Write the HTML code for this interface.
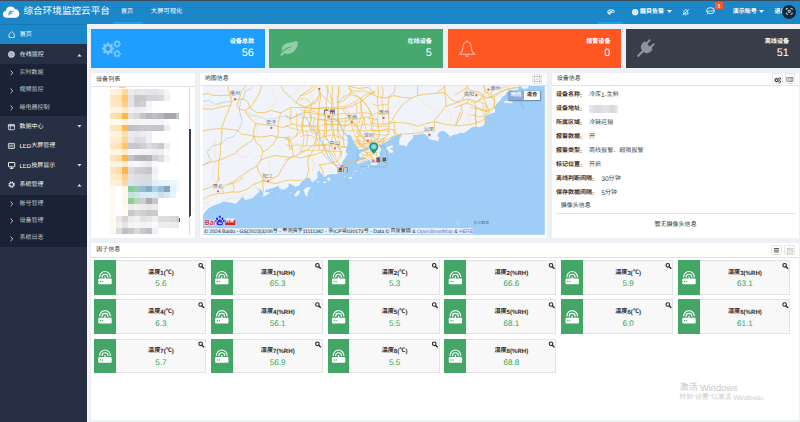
<!DOCTYPE html>
<html lang="zh-CN">
<head>
<meta charset="utf-8">
<title>综合环境监控云平台</title>
<style>
html,body{margin:0;padding:0;}
body{width:800px;height:422px;overflow:hidden;position:relative;background:#edf0f5;font-family:"Liberation Sans","Noto Sans CJK SC",sans-serif;text-rendering:geometricPrecision;}
div,span{box-sizing:border-box;}
svg{position:absolute;overflow:visible;}
i{font-style:normal;position:relative;top:-1px;}
</style>
</head>
<body>
<!-- top bar -->
<div style="position:absolute;left:0px;top:0px;width:800px;height:24px;background:#1b87c9;"></div><div style="position:absolute;left:0px;top:0px;width:800px;height:1px;background:#3a4b5c;"></div><svg style="left:1.800px;top:5.700px" width="18.400" height="11.800" viewBox="0 0 36.400 24.400"><path d="M8.500 24.200a7.300 7.300 0 0 1-1.200-14.500a10 10 0 0 1 19-3a9 9 0 0 1 2.600 17.500z" fill="#fff"/><path d="M15.300 9.800h8.200l-.8 2.200h-5.400l-.7 1.800h4.400l-.8 2.100h-4.400l-1.200 3.200h-2.700z" fill="#2d90d1"/><path d="M11.500 12.500h2.600M10.800 14.600h2.600" stroke="#6cb0e0" stroke-width=".9"/></svg><div style="position:absolute;left:23.5px;top:4px;height:17px;line-height:17px;font-size:9.6px;color:#fff;white-space:nowrap;"><i>综</i><i>合</i><i>环</i><i>境</i><i>监</i><i>控</i><i>云</i><i>平</i><i>台</i></div><div style="position:absolute;left:127.1px;top:7px;height:12px;line-height:12px;font-size:6px;color:#fff;transform:translateX(-50%);white-space:nowrap;"><i>首</i><i>页</i></div><div style="position:absolute;left:166.6px;top:6px;height:13px;line-height:13px;font-size:6.3px;color:#fff;transform:translateX(-50%);white-space:nowrap;"><i>大</i><i>屏</i><i>可</i><i>视</i><i>化</i></div><div style="position:absolute;left:113px;top:22.3px;width:29.6px;height:1.7px;background:#19a3ee;"></div><div style="position:absolute;left:597.9px;top:22.4px;width:25.1px;height:1.6px;background:#19a3ee;"></div><svg style="left:606.5px;top:9px" width="8" height="6" viewBox="0 0 16 12"><path d="M8 .5C3.6.5.5 3 .5 6s2.4 5.5 5.4 5.500c1.200 0 1.600-.8 1.300-1.700-.4-1 .2-1.800 1.300-1.800h2.300c2.600 0 4.700-1.200 4.700-3.300C15.500 2.300 12.400.5 8 .5z" fill="#fff" fill-opacity=".8"/><circle cx="4.300" cy="5" r="1.500" fill="#1b87c9"/><circle cx="8" cy="3.300" r="1.300" fill="#1b87c9"/><circle cx="11.800" cy="5" r="1.500" fill="#1b87c9"/></svg><svg style="left:631.7px;top:8.9px" width="6.4" height="6.4" viewBox="0 0 16 16"><circle cx="8" cy="8" r="7.800" fill="#fff"/><path d="M1.500 5.500h13M1.500 10.500h13" stroke="#6eb3df" stroke-width=".9"/><ellipse cx="8" cy="8" rx="3.200" ry="7" fill="none" stroke="#6eb3df" stroke-width=".9"/></svg><div style="position:absolute;left:640px;top:7px;height:12px;line-height:12px;font-size:6px;color:#fff;font-weight:bold;white-space:nowrap;"><i>醒</i><i>目</i><i>告</i><i>警</i></div><svg style="left:666.5px;top:10.2px" width="5" height="2.9" viewBox="0 0 10 6"><path d="M0 0h10L5 6z" fill="#fff"/></svg><svg style="left:682px;top:8.8px" width="7.6" height="6.6" viewBox="0 0 16 14"><path d="M8 1.500c-2.400 0-4 1.800-4 4.200v2.600l-1.400 2h10.800l-1.400-2V5.700c0-2.400-1.600-4.200-4-4.200z" fill="none" stroke="#fff" stroke-width="1.600"/><path d="M6.500 12.500h3" stroke="#fff" stroke-width="1.600"/><path d="M1.500 13L14.500 .8" stroke="#fff" stroke-width="1.700"/></svg><svg style="left:706px;top:7.400px" width="9" height="8" viewBox="0 0 18 16"><ellipse cx="9" cy="7.300" rx="7.800" ry="6" fill="none" stroke="#fff" stroke-width="1.700"/><path d="M4 12.500L2 15.300M1.200 8.300c5 .8 10.500 0 15.600-2.300" stroke="#fff" stroke-width="1.500" fill="none"/></svg><div style="position:absolute;left:715px;top:2.4px;width:8.3px;height:7.1px;background:#ff5722;border-radius:.8px;"></div><div style="position:absolute;left:719.1px;top:1px;height:12px;line-height:12px;font-size:5.4px;color:#fff;font-weight:bold;transform:translateX(-50%);white-space:nowrap;">1</div><div style="position:absolute;left:732.8px;top:7px;height:12px;line-height:12px;font-size:6px;color:#fff;font-weight:bold;white-space:nowrap;"><i>演</i><i>示</i><i>账</i><i>号</i></div><svg style="left:759.3px;top:10.2px" width="5" height="2.9" viewBox="0 0 10 6"><path d="M0 0h10L5 6z" fill="#fff"/></svg><div style="position:absolute;left:774.4px;top:7px;height:12px;line-height:12px;font-size:6px;color:#fff;font-weight:bold;white-space:nowrap;"><i>退</i><i>出</i></div>
<!-- sidebar -->
<div style="position:absolute;left:0px;top:24px;width:86.6px;height:398px;background:#262f43;"></div><div style="position:absolute;left:0px;top:24px;width:86.6px;height:20.3px;background:#1b87c9;"></div><div style="position:absolute;left:0px;top:23.6px;width:86.6px;height:0.8px;background:#1878b4;"></div><div style="position:absolute;left:0px;top:64px;width:86.6px;height:52px;background:#1b2235;"></div><div style="position:absolute;left:0px;top:194.8px;width:86.6px;height:52.2px;background:#1b2235;"></div><div style="position:absolute;left:86.6px;top:24px;width:2px;height:398px;background:#f4f6f9;"></div><svg style="left:7.900px;top:30.900px" width="7.400" height="7" viewBox="0 0 15 14"><path d="M2.300 6.200L7.500 1l5.200 5.200V13H2.300z" fill="none" stroke="#fff" stroke-width="1.500" stroke-linejoin="round"/></svg><div style="position:absolute;left:19.7px;top:30px;height:12px;line-height:12px;font-size:6px;color:#fff;white-space:nowrap;"><i>首</i><i>页</i></div><svg style="left:8.200px;top:50.800px" width="6.800" height="6.800" viewBox="0 0 16 16"><circle cx="8" cy="8" r="7" fill="#b9bfcb" stroke="#f4f5f8" stroke-width="1.800"/><path d="M2.500 5.800h11M2.500 10.200h11" stroke="#8e96a6" stroke-width="1"/><ellipse cx="8" cy="8" rx="3" ry="6.400" fill="none" stroke="#8e96a6" stroke-width="1"/></svg><div style="position:absolute;left:19.7px;top:50px;height:12px;line-height:12px;font-size:6px;color:#ffffff;white-space:nowrap;"><i>在</i><i>线</i><i>监</i><i>控</i></div><svg style="left:77.2px;top:53.5px" width="4.800" height="2.500" viewBox="0 0 10 6"><path d="M0 6h10L5 0z" fill="#e3e6ec"/></svg><svg style="left:9.8px;top:70.3px" width="3.400" height="5.600" viewBox="0 0 6 10"><path d="M1 1l4 4-4 4" fill="none" stroke="#e6e9ef" stroke-width="1.500"/></svg><div style="position:absolute;left:19.5px;top:68px;height:12px;line-height:12px;font-size:6px;color:#c9ced8;white-space:nowrap;"><i>实</i><i>时</i><i>数</i><i>据</i></div><svg style="left:9.8px;top:87.5px" width="3.400" height="5.600" viewBox="0 0 6 10"><path d="M1 1l4 4-4 4" fill="none" stroke="#e6e9ef" stroke-width="1.500"/></svg><div style="position:absolute;left:19.5px;top:85px;height:12px;line-height:12px;font-size:6px;color:#c9ced8;white-space:nowrap;"><i>视</i><i>频</i><i>监</i><i>控</i></div><svg style="left:9.8px;top:105.10000000000001px" width="3.400" height="5.600" viewBox="0 0 6 10"><path d="M1 1l4 4-4 4" fill="none" stroke="#e6e9ef" stroke-width="1.500"/></svg><div style="position:absolute;left:19.5px;top:103px;height:12px;line-height:12px;font-size:6px;color:#c9ced8;white-space:nowrap;"><i>继</i><i>电</i><i>器</i><i>控</i><i>制</i></div><svg style="left:8px;top:123.500px" width="6.900" height="6.200" viewBox="0 0 14 12.600"><rect x=".8" y=".8" width="12.400" height="11" rx="1.200" fill="none" stroke="#fff" stroke-width="1.500"/><path d="M.8 3.600h12.400" stroke="#fff" stroke-width="2"/><path d="M4.800 4v7.500" stroke="#fff" stroke-width="1.300"/></svg><div style="position:absolute;left:19.5px;top:122px;height:12px;line-height:12px;font-size:6px;color:#ffffff;white-space:nowrap;"><i>数</i><i>据</i><i>中</i><i>心</i></div><svg style="left:77.2px;top:125.10000000000001px" width="4.800" height="2.500" viewBox="0 0 10 6"><path d="M0 0h10L5 6z" fill="#e3e6ec"/></svg><svg style="left:8px;top:142.800px" width="6.900" height="5.900" viewBox="0 0 14 12"><rect x=".8" y=".8" width="12.400" height="10.400" rx="1" fill="none" stroke="#fff" stroke-width="1.500"/><path d="M3.600 3v6M6 3v6M8.400 3v6M10.600 3v1.400M10.600 5.300v1.400M10.600 7.600V9" stroke="#fff" stroke-width="1.200"/></svg><div style="position:absolute;left:19.5px;top:141px;height:12px;line-height:12px;font-size:6px;color:#ffffff;white-space:nowrap;">LED<i>大</i><i>屏</i><i>管</i><i>理</i></div><svg style="left:8px;top:161.700px" width="7.300" height="7" viewBox="0 0 15 14.400"><rect x="1" y="1" width="13" height="9" rx="1" fill="none" stroke="#fff" stroke-width="1.900"/><path d="M4 13.300h7M7.500 10v3" stroke="#fff" stroke-width="1.800"/></svg><div style="position:absolute;left:19.5px;top:161px;height:12px;line-height:12px;font-size:6px;color:#ffffff;white-space:nowrap;">LED<i>投</i><i>屏</i><i>显</i><i>示</i></div><svg style="left:77.2px;top:164.20000000000002px" width="4.800" height="2.500" viewBox="0 0 10 6"><path d="M0 0h10L5 6z" fill="#e3e6ec"/></svg><svg style="left:8px;top:181.200px" width="7.200" height="7.200" viewBox="0 0 16 16"><circle cx="8" cy="8" r="5.600" fill="none" stroke="#fff" stroke-width="3" stroke-dasharray="2.700 1.700"/><circle cx="8" cy="8" r="4" fill="none" stroke="#fff" stroke-width="1.700"/></svg><div style="position:absolute;left:19.5px;top:180px;height:12px;line-height:12px;font-size:6px;color:#ffffff;white-space:nowrap;"><i>系</i><i>统</i><i>管</i><i>理</i></div><svg style="left:77.2px;top:183.70000000000002px" width="4.800" height="2.500" viewBox="0 0 10 6"><path d="M0 6h10L5 0z" fill="#e3e6ec"/></svg><svg style="left:9.8px;top:201.1px" width="3.400" height="5.600" viewBox="0 0 6 10"><path d="M1 1l4 4-4 4" fill="none" stroke="#e6e9ef" stroke-width="1.500"/></svg><div style="position:absolute;left:19.5px;top:199px;height:12px;line-height:12px;font-size:6px;color:#c9ced8;white-space:nowrap;"><i>账</i><i>号</i><i>管</i><i>理</i></div><svg style="left:9.8px;top:218.39999999999998px" width="3.400" height="5.600" viewBox="0 0 6 10"><path d="M1 1l4 4-4 4" fill="none" stroke="#e6e9ef" stroke-width="1.500"/></svg><div style="position:absolute;left:19.5px;top:216px;height:12px;line-height:12px;font-size:6px;color:#c9ced8;white-space:nowrap;"><i>设</i><i>备</i><i>管</i><i>理</i></div><svg style="left:9.8px;top:235.7px" width="3.400" height="5.600" viewBox="0 0 6 10"><path d="M1 1l4 4-4 4" fill="none" stroke="#e6e9ef" stroke-width="1.500"/></svg><div style="position:absolute;left:19.5px;top:233px;height:12px;line-height:12px;font-size:6px;color:#c9ced8;white-space:nowrap;"><i>系</i><i>统</i><i>日</i><i>志</i></div>
<!-- stat cards -->
<div style="position:absolute;left:91.1px;top:28.9px;width:173.9px;height:38.8px;background:#1e9fff;"></div><div style="position:absolute;left:254.0px;top:36px;height:13px;line-height:13px;font-size:6.1px;color:#fff;font-weight:bold;transform:translateX(-100%);white-space:nowrap;"><i>设</i><i>备</i><i>总</i><i>数</i></div><div style="position:absolute;left:253.8px;top:44px;height:18px;line-height:18px;font-size:10.9px;color:#fff;transform:translateX(-100%);white-space:nowrap;">56</div><div style="position:absolute;left:269.3px;top:28.9px;width:173.6px;height:38.8px;background:#46a86c;"></div><div style="position:absolute;left:431.9px;top:36px;height:13px;line-height:13px;font-size:6.1px;color:#fff;font-weight:bold;transform:translateX(-100%);white-space:nowrap;"><i>在</i><i>线</i><i>设</i><i>备</i></div><div style="position:absolute;left:431.7px;top:44px;height:18px;line-height:18px;font-size:10.9px;color:#fff;transform:translateX(-100%);white-space:nowrap;">5</div><div style="position:absolute;left:447.9px;top:28.9px;width:173.6px;height:38.8px;background:#ff5722;"></div><div style="position:absolute;left:610.5px;top:36px;height:13px;line-height:13px;font-size:6.1px;color:#fff;font-weight:bold;transform:translateX(-100%);white-space:nowrap;"><i>报</i><i>警</i><i>设</i><i>备</i></div><div style="position:absolute;left:610.3px;top:44px;height:18px;line-height:18px;font-size:10.9px;color:#fff;transform:translateX(-100%);white-space:nowrap;">0</div><div style="position:absolute;left:626.1px;top:28.9px;width:174px;height:38.8px;background:#393d49;"></div><div style="position:absolute;left:789.1px;top:36px;height:13px;line-height:13px;font-size:6.1px;color:#fff;font-weight:bold;transform:translateX(-100%);white-space:nowrap;"><i>离</i><i>线</i><i>设</i><i>备</i></div><div style="position:absolute;left:788.9px;top:44px;height:18px;line-height:18px;font-size:10.9px;color:#fff;transform:translateX(-100%);white-space:nowrap;">51</div><svg style="left:0;top:0" width="800" height="422" viewBox="0 0 800 422"><g fill="#fff" fill-opacity=".42" fill-rule="evenodd"><path d="M114.21 47.52 L114.21 49.68 L112.66 49.72 L112.08 51.10 L113.15 52.22 L111.62 53.75 L110.50 52.68 L109.12 53.26 L109.08 54.81 L106.92 54.81 L106.88 53.26 L105.50 52.68 L104.38 53.75 L102.85 52.22 L103.92 51.10 L103.34 49.72 L101.79 49.68 L101.79 47.52 L103.34 47.48 L103.92 46.10 L102.85 44.98 L104.38 43.45 L105.50 44.52 L106.88 43.94 L106.92 42.39 L109.08 42.39 L109.12 43.94 L110.50 44.52 L111.62 43.45 L113.15 44.98 L112.08 46.10 L112.66 47.48Z M110.40 48.60 a2.4 2.4 0 1 0 -4.8 0 a2.4 2.4 0 1 0 4.8 0Z"/><path d="M120.94 43.23 L120.94 44.57 L119.98 44.59 L119.63 45.45 L120.29 46.14 L119.34 47.09 L118.65 46.43 L117.79 46.78 L117.77 47.74 L116.43 47.74 L116.41 46.78 L115.55 46.43 L114.86 47.09 L113.91 46.14 L114.57 45.45 L114.22 44.59 L113.26 44.57 L113.26 43.23 L114.22 43.21 L114.57 42.35 L113.91 41.66 L114.86 40.71 L115.55 41.37 L116.41 41.02 L116.43 40.06 L117.77 40.06 L117.79 41.02 L118.65 41.37 L119.34 40.71 L120.29 41.66 L119.63 42.35 L119.98 43.21Z M118.60 43.90 a1.5 1.5 0 1 0 -3.0 0 a1.5 1.5 0 1 0 3.0 0Z"/><path d="M120.94 53.03 L120.94 54.37 L119.98 54.39 L119.63 55.25 L120.29 55.94 L119.34 56.89 L118.65 56.23 L117.79 56.58 L117.77 57.54 L116.43 57.54 L116.41 56.58 L115.55 56.23 L114.86 56.89 L113.91 55.94 L114.57 55.25 L114.22 54.39 L113.26 54.37 L113.26 53.03 L114.22 53.01 L114.57 52.15 L113.91 51.46 L114.86 50.51 L115.55 51.17 L116.41 50.82 L116.43 49.86 L117.77 49.86 L117.79 50.82 L118.65 51.17 L119.34 50.51 L120.29 51.46 L119.63 52.15 L119.98 53.01Z M118.60 53.70 a1.5 1.5 0 1 0 -3.0 0 a1.5 1.5 0 1 0 3.0 0Z"/></g><g transform="translate(279.800 40.700) scale(.0362,.0305)" fill="#fff" fill-opacity=".42"><path d="M505 32c-15-20-40-24-62-12C400 44 340 60 270 70 150 88 70 160 60 270c-3 34 4 66 16 92C110 290 200 230 330 200c8-2 12 10 4 13C200 260 90 340 20 470c-8 16 0 36 17 42 16 6 33-2 40-17 12-25 28-50 46-74 50 30 115 38 180 12C440 380 540 180 505 32z" transform="scale(.97)"/></g><g transform="translate(459 40)" fill="none" stroke="#fff" stroke-opacity=".52" stroke-width="1.150"><path d="M8.100 1.700c-2.900 .4-4.300 2.700-4.300 6.100 0 3.300-1.200 5.100-3 6.500h14.600c-1.800-1.400-3-3.200-3-6.500 0-3.400-1.400-5.700-4.300-6.100z"/><path d="M8.100 1.700V.3" /><path d="M6 15.400a2.200 2.200 0 0 0 4.200 0z" fill="#fff" fill-opacity=".52" stroke="none"/></g><g transform="translate(645.700 48.300) rotate(45) scale(.9)" fill="#fff" fill-opacity=".44"><rect x="-4.300" y="-10.500" width="2.300" height="6.500" rx="1.100"/><rect x="2" y="-10.500" width="2.300" height="6.500" rx="1.100"/><path d="M-6.500 -4.600h13v2.800a6.500 6.500 0 0 1-5.300 6.400V12.800h-2.400V4.600A6.500 6.500 0 0 1-6.500-1.800z"/></g></svg>
<!-- device list -->
<div style="position:absolute;left:91.1px;top:72.8px;width:103.9px;height:164.8px;background:#fff;box-shadow:0 .4px 1px rgba(0,0,0,.08);"></div><div style="position:absolute;left:91.1px;top:85.75px;width:103.9px;height:0.7px;background:#e0e2e6;"></div><div style="position:absolute;left:96.1px;top:75px;height:12px;line-height:12px;font-size:6px;color:#333;white-space:nowrap;"><i>设</i><i>备</i><i>列</i><i>表</i></div><svg style="left:0;top:0" width="800" height="422" viewBox="0 0 800 422" shape-rendering="crispEdges"><defs><clipPath id="lc"><rect x="91.200" y="86.500" width="102" height="147.700"/></clipPath><filter id="mb"><feGaussianBlur stdDeviation=".7"/></filter></defs><g clip-path="url(#lc)"><g filter="url(#mb)"><rect x="110.2" y="88.9" width="6.2" height="6.24" fill="#fff3e0"/><rect x="116.2" y="88.9" width="6.2" height="6.24" fill="#ffeed5"/><rect x="122.2" y="88.9" width="6.2" height="6.24" fill="#fdd9a0"/><rect x="128.2" y="88.9" width="6.2" height="6.24" fill="#ececec"/><rect x="134.2" y="88.9" width="6.2" height="6.24" fill="#e6e6ea"/><rect x="140.2" y="88.9" width="6.2" height="6.24" fill="#e8e8ec"/><rect x="146.2" y="88.9" width="6.2" height="6.24" fill="#e4e4e8"/><rect x="152.2" y="88.9" width="6.2" height="6.24" fill="#e4e4e8"/><rect x="158.2" y="88.9" width="6.2" height="6.24" fill="#e8e8ea"/><rect x="164.2" y="88.9" width="6.2" height="6.24" fill="#f5f6f8"/><rect x="110.2" y="94.9" width="6.2" height="6.24" fill="#ffe6c0"/><rect x="116.2" y="94.9" width="6.2" height="6.24" fill="#ffe2b8"/><rect x="122.2" y="94.9" width="6.2" height="6.24" fill="#fdc870"/><rect x="128.2" y="94.9" width="6.2" height="6.24" fill="#e2e2e4"/><rect x="134.2" y="94.9" width="6.2" height="6.24" fill="#c8c8d0"/><rect x="140.2" y="94.9" width="6.2" height="6.24" fill="#c8c8d0"/><rect x="146.2" y="94.9" width="6.2" height="6.24" fill="#d4d4d8"/><rect x="152.2" y="94.9" width="6.2" height="6.24" fill="#d4d4d8"/><rect x="158.2" y="94.9" width="6.2" height="6.24" fill="#d8d8dc"/><rect x="164.2" y="94.9" width="6.2" height="6.24" fill="#eef0f2"/><rect x="110.2" y="101.0" width="6.2" height="6.24" fill="#ffe9c8"/><rect x="116.2" y="101.0" width="6.2" height="6.24" fill="#ffe6c0"/><rect x="122.2" y="101.0" width="6.2" height="6.24" fill="#fdd08a"/><rect x="128.2" y="101.0" width="6.2" height="6.24" fill="#e4e4e6"/><rect x="134.2" y="101.0" width="6.2" height="6.24" fill="#cacad0"/><rect x="140.2" y="101.0" width="6.2" height="6.24" fill="#d0d0d4"/><rect x="146.2" y="101.0" width="6.2" height="6.24" fill="#f4f4f8"/><rect x="110.2" y="107.0" width="6.2" height="6.24" fill="#fff6e8"/><rect x="116.2" y="107.0" width="6.2" height="6.24" fill="#fff4e4"/><rect x="122.2" y="107.0" width="6.2" height="6.24" fill="#ffe8c4"/><rect x="128.2" y="107.0" width="6.2" height="6.24" fill="#f2f2f2"/><rect x="134.2" y="107.0" width="6.2" height="6.24" fill="#eeeeee"/><rect x="140.2" y="107.0" width="6.2" height="6.24" fill="#f0f0f2"/><rect x="146.2" y="107.0" width="6.2" height="6.24" fill="#f8f8fa"/><rect x="110.2" y="113.1" width="6.2" height="6.24" fill="#ffe0b0"/><rect x="116.2" y="113.1" width="6.2" height="6.24" fill="#ffd9a0"/><rect x="122.2" y="113.1" width="6.2" height="6.24" fill="#fdb748"/><rect x="128.2" y="113.1" width="6.2" height="6.24" fill="#e0e0e2"/><rect x="134.2" y="113.1" width="6.2" height="6.24" fill="#d8d8da"/><rect x="140.2" y="113.1" width="6.2" height="6.24" fill="#c4c4c8"/><rect x="146.2" y="113.1" width="6.2" height="6.24" fill="#b8b8c0"/><rect x="152.2" y="113.1" width="6.2" height="6.24" fill="#c0c0c4"/><rect x="158.2" y="113.1" width="6.2" height="6.24" fill="#b8b8bc"/><rect x="164.2" y="113.1" width="6.2" height="6.24" fill="#a8a8ac"/><rect x="170.2" y="113.1" width="6.2" height="6.24" fill="#a8a8ac"/><rect x="176.2" y="113.1" width="2.95" height="6.24" fill="#b8c8d0"/><rect x="110.2" y="119.1" width="6.2" height="6.24" fill="#fffaf2"/><rect x="116.2" y="119.1" width="6.2" height="6.24" fill="#fff8ee"/><rect x="122.2" y="119.1" width="6.2" height="6.24" fill="#fff0dc"/><rect x="128.2" y="119.1" width="6.2" height="6.24" fill="#f6f6f6"/><rect x="134.2" y="119.1" width="6.2" height="6.24" fill="#f4f4f4"/><rect x="140.2" y="119.1" width="6.2" height="6.24" fill="#f6f8f8"/><rect x="146.2" y="119.1" width="6.2" height="6.24" fill="#f4f6f6"/><rect x="152.2" y="119.1" width="6.2" height="6.24" fill="#f4f4f6"/><rect x="158.2" y="119.1" width="6.2" height="6.24" fill="#f4f4f6"/><rect x="164.2" y="119.1" width="6.2" height="6.24" fill="#fafafa"/><rect x="110.2" y="125.1" width="6.2" height="6.24" fill="#ffe6c0"/><rect x="116.2" y="125.1" width="6.2" height="6.24" fill="#ffe0b0"/><rect x="122.2" y="125.1" width="6.2" height="6.24" fill="#fdbb50"/><rect x="128.2" y="125.1" width="6.2" height="6.24" fill="#c0c0c4"/><rect x="134.2" y="125.1" width="6.2" height="6.24" fill="#c4c4c8"/><rect x="140.2" y="125.1" width="6.2" height="6.24" fill="#c8c8cc"/><rect x="146.2" y="125.1" width="6.2" height="6.24" fill="#c8c8cc"/><rect x="152.2" y="125.1" width="6.2" height="6.24" fill="#c4c4cc"/><rect x="158.2" y="125.1" width="6.2" height="6.24" fill="#c4c4cc"/><rect x="164.2" y="125.1" width="6.2" height="6.24" fill="#ececf0"/><rect x="110.2" y="131.2" width="6.2" height="6.24" fill="#fff2e0"/><rect x="116.2" y="131.2" width="6.2" height="6.24" fill="#fff0d8"/><rect x="122.2" y="131.2" width="6.2" height="6.24" fill="#fee0b0"/><rect x="128.2" y="131.2" width="6.2" height="6.24" fill="#eaeaec"/><rect x="134.2" y="131.2" width="6.2" height="6.24" fill="#e8e8ea"/><rect x="140.2" y="131.2" width="6.2" height="6.24" fill="#ececee"/><rect x="146.2" y="131.2" width="6.2" height="6.24" fill="#f0f0f4"/><rect x="110.2" y="137.2" width="6.2" height="6.24" fill="#ffeed4"/><rect x="116.2" y="137.2" width="6.2" height="6.24" fill="#ffeacc"/><rect x="122.2" y="137.2" width="6.2" height="6.24" fill="#fdd698"/><rect x="128.2" y="137.2" width="6.2" height="6.24" fill="#e6e6e8"/><rect x="134.2" y="137.2" width="6.2" height="6.24" fill="#dcdce0"/><rect x="140.2" y="137.2" width="6.2" height="6.24" fill="#dedee2"/><rect x="146.2" y="137.2" width="6.2" height="6.24" fill="#f0f0f4"/><rect x="110.2" y="143.3" width="6.2" height="6.24" fill="#ffe6c0"/><rect x="116.2" y="143.3" width="6.2" height="6.24" fill="#ffe0b4"/><rect x="122.2" y="143.3" width="6.2" height="6.24" fill="#fdc468"/><rect x="128.2" y="143.3" width="6.2" height="6.24" fill="#c8c8cc"/><rect x="134.2" y="143.3" width="6.2" height="6.24" fill="#c8c8cc"/><rect x="140.2" y="143.3" width="6.2" height="6.24" fill="#d0d0d4"/><rect x="146.2" y="143.3" width="6.2" height="6.24" fill="#dcdce0"/><rect x="152.2" y="143.3" width="6.2" height="6.24" fill="#d4d4d8"/><rect x="158.2" y="143.3" width="6.2" height="6.24" fill="#c8c8d0"/><rect x="164.2" y="143.3" width="6.2" height="6.24" fill="#eceef0"/><rect x="110.2" y="149.3" width="6.2" height="6.24" fill="#fff6ea"/><rect x="116.2" y="149.3" width="6.2" height="6.24" fill="#fff4e6"/><rect x="122.2" y="149.3" width="6.2" height="6.24" fill="#ffeacc"/><rect x="128.2" y="149.3" width="6.2" height="6.24" fill="#f6f6f6"/><rect x="134.2" y="149.3" width="6.2" height="6.24" fill="#f6f6f6"/><rect x="140.2" y="149.3" width="6.2" height="6.24" fill="#f4f4f6"/><rect x="146.2" y="149.3" width="6.2" height="6.24" fill="#f2f2f4"/><rect x="152.2" y="149.3" width="6.2" height="6.24" fill="#eeeef0"/><rect x="158.2" y="149.3" width="6.2" height="6.24" fill="#f0f0f2"/><rect x="164.2" y="149.3" width="6.2" height="6.24" fill="#fafafa"/><rect x="110.2" y="155.3" width="6.2" height="6.24" fill="#ffe4b8"/><rect x="116.2" y="155.3" width="6.2" height="6.24" fill="#ffdca8"/><rect x="122.2" y="155.3" width="6.2" height="6.24" fill="#fdb748"/><rect x="128.2" y="155.3" width="6.2" height="6.24" fill="#c4c4c8"/><rect x="134.2" y="155.3" width="6.2" height="6.24" fill="#b4b4b8"/><rect x="140.2" y="155.3" width="6.2" height="6.24" fill="#b0b0b4"/><rect x="146.2" y="155.3" width="6.2" height="6.24" fill="#b4b4bc"/><rect x="152.2" y="155.3" width="6.2" height="6.24" fill="#d0d0d4"/><rect x="158.2" y="155.3" width="6.2" height="6.24" fill="#dcdce0"/><rect x="164.2" y="155.3" width="6.2" height="6.24" fill="#f4f4f6"/><rect x="110.2" y="161.4" width="6.2" height="6.24" fill="#fff4e4"/><rect x="116.2" y="161.4" width="6.2" height="6.24" fill="#fff2e0"/><rect x="122.2" y="161.4" width="6.2" height="6.24" fill="#ffecd0"/><rect x="128.2" y="161.4" width="6.2" height="6.24" fill="#f4f4f4"/><rect x="134.2" y="161.4" width="6.2" height="6.24" fill="#f6f8f8"/><rect x="140.2" y="161.4" width="6.2" height="6.24" fill="#f2f2f2"/><rect x="146.2" y="161.4" width="6.2" height="6.24" fill="#ececee"/><rect x="152.2" y="161.4" width="6.2" height="6.24" fill="#f8f8f8"/><rect x="110.2" y="167.4" width="6.2" height="6.24" fill="#ffe4b8"/><rect x="116.2" y="167.4" width="6.2" height="6.24" fill="#ffdcac"/><rect x="122.2" y="167.4" width="6.2" height="6.24" fill="#fdb748"/><rect x="128.2" y="167.4" width="6.2" height="6.24" fill="#dcdcde"/><rect x="134.2" y="167.4" width="6.2" height="6.24" fill="#d0d0d4"/><rect x="140.2" y="167.4" width="6.2" height="6.24" fill="#ccccd0"/><rect x="146.2" y="167.4" width="6.2" height="6.24" fill="#c8c4cc"/><rect x="152.2" y="167.4" width="6.2" height="6.24" fill="#f0f0f2"/><rect x="110.2" y="173.5" width="6.2" height="6.24" fill="#ffeccc"/><rect x="116.2" y="173.5" width="6.2" height="6.24" fill="#ffe8c4"/><rect x="122.2" y="173.5" width="6.2" height="6.24" fill="#fdd08c"/><rect x="128.2" y="173.5" width="6.2" height="6.24" fill="#e4e4e6"/><rect x="134.2" y="173.5" width="6.2" height="6.24" fill="#dedee0"/><rect x="140.2" y="173.5" width="6.2" height="6.24" fill="#dcdce0"/><rect x="146.2" y="173.5" width="6.2" height="6.24" fill="#dcdce0"/><rect x="152.2" y="173.5" width="6.2" height="6.24" fill="#f4f4f6"/><rect x="110.2" y="179.5" width="6.2" height="6.24" fill="#fff0dc"/><rect x="116.2" y="179.5" width="6.2" height="6.24" fill="#ffeed4"/><rect x="122.2" y="179.5" width="6.2" height="6.24" fill="#fdd8a0"/><rect x="128.2" y="179.5" width="6.2" height="6.24" fill="#dce4ec"/><rect x="134.2" y="179.5" width="6.2" height="6.24" fill="#d8e0e8"/><rect x="140.2" y="179.5" width="6.2" height="6.24" fill="#d4dce6"/><rect x="146.2" y="179.5" width="6.2" height="6.24" fill="#d4dce6"/><rect x="152.2" y="179.5" width="6.2" height="6.24" fill="#e4eef6"/><rect x="158.2" y="179.5" width="6.2" height="6.24" fill="#e8f2fa"/><rect x="164.2" y="179.5" width="6.2" height="6.24" fill="#e8f4fc"/><rect x="170.2" y="179.5" width="6.2" height="6.24" fill="#eef6fc"/><rect x="176.2" y="179.5" width="2.95" height="6.24" fill="#f6fafe"/><rect x="110.2" y="185.5" width="6.2" height="6.24" fill="#fffaf0"/><rect x="122.2" y="185.5" width="6.2" height="6.24" fill="#fff6e6"/><rect x="128.2" y="185.5" width="6.2" height="6.24" fill="#88cba0"/><rect x="134.2" y="185.5" width="6.2" height="6.24" fill="#90d0b0"/><rect x="140.2" y="185.5" width="6.2" height="6.24" fill="#98bcd4"/><rect x="146.2" y="185.5" width="6.2" height="6.24" fill="#88acc4"/><rect x="152.2" y="185.5" width="6.2" height="6.24" fill="#a8d0e8"/><rect x="158.2" y="185.5" width="6.2" height="6.24" fill="#98c0d8"/><rect x="164.2" y="185.5" width="6.2" height="6.24" fill="#88a8b8"/><rect x="170.2" y="185.5" width="6.2" height="6.24" fill="#e0f2fc"/><rect x="176.2" y="185.5" width="2.95" height="6.24" fill="#eef8fe"/><rect x="110.2" y="191.6" width="6.2" height="6.24" fill="#fffaf0"/><rect x="122.2" y="191.6" width="6.2" height="6.24" fill="#fff8ec"/><rect x="128.2" y="191.6" width="6.2" height="6.24" fill="#c8e0e0"/><rect x="134.2" y="191.6" width="6.2" height="6.24" fill="#cce4e8"/><rect x="140.2" y="191.6" width="6.2" height="6.24" fill="#d8ecf8"/><rect x="146.2" y="191.6" width="6.2" height="6.24" fill="#d8ecf8"/><rect x="152.2" y="191.6" width="6.2" height="6.24" fill="#d8eefa"/><rect x="158.2" y="191.6" width="6.2" height="6.24" fill="#cce0ec"/><rect x="164.2" y="191.6" width="6.2" height="6.24" fill="#d0e8f6"/><rect x="170.2" y="191.6" width="6.2" height="6.24" fill="#e4f4fc"/><rect x="110.2" y="197.6" width="6.2" height="6.24" fill="#fffaf0"/><rect x="122.2" y="197.6" width="6.2" height="6.24" fill="#fff6e8"/><rect x="128.2" y="197.6" width="6.2" height="6.24" fill="#90cc98"/><rect x="134.2" y="197.6" width="6.2" height="6.24" fill="#b0dcb0"/><rect x="140.2" y="197.6" width="6.2" height="6.24" fill="#d0ccd0"/><rect x="146.2" y="197.6" width="6.2" height="6.24" fill="#acacb0"/><rect x="152.2" y="197.6" width="6.2" height="6.24" fill="#c8c8cc"/><rect x="110.2" y="203.7" width="6.2" height="6.24" fill="#fffaf2"/><rect x="122.2" y="203.7" width="6.2" height="6.24" fill="#fffaf0"/><rect x="128.2" y="203.7" width="6.2" height="6.24" fill="#ececec"/><rect x="134.2" y="203.7" width="6.2" height="6.24" fill="#f0f0f0"/><rect x="140.2" y="203.7" width="6.2" height="6.24" fill="#ececee"/><rect x="146.2" y="203.7" width="6.2" height="6.24" fill="#e8e8ea"/><rect x="152.2" y="203.7" width="6.2" height="6.24" fill="#ececee"/><rect x="110.2" y="209.7" width="6.2" height="6.24" fill="#fffaf0"/><rect x="122.2" y="209.7" width="6.2" height="6.24" fill="#fffaf2"/><rect x="128.2" y="209.7" width="6.2" height="6.24" fill="#c8c8cc"/><rect x="134.2" y="209.7" width="6.2" height="6.24" fill="#d4d4d6"/><rect x="140.2" y="209.7" width="6.2" height="6.24" fill="#d0d0d4"/><rect x="146.2" y="209.7" width="6.2" height="6.24" fill="#c8c8cc"/><rect x="152.2" y="209.7" width="6.2" height="6.24" fill="#ccccce"/><rect x="110.2" y="215.7" width="6.2" height="6.24" fill="#fff8ec"/><rect x="116.2" y="215.7" width="6.2" height="6.24" fill="#e8e8e8"/><rect x="122.2" y="215.7" width="6.2" height="6.24" fill="#d4d4d4"/><rect x="128.2" y="215.7" width="6.2" height="6.24" fill="#ececec"/><rect x="134.2" y="215.7" width="6.2" height="6.24" fill="#f0f0f0"/><rect x="140.2" y="215.7" width="6.2" height="6.24" fill="#e0e0e2"/><rect x="146.2" y="215.7" width="6.2" height="6.24" fill="#e4e4e6"/><rect x="152.2" y="215.7" width="6.2" height="6.24" fill="#f0f0f0"/><rect x="158.2" y="215.7" width="6.2" height="6.24" fill="#dcdcdc"/><rect x="164.2" y="215.7" width="6.2" height="6.24" fill="#dcdcdc"/><rect x="170.2" y="215.7" width="6.2" height="6.24" fill="#d8d8d8"/><rect x="176.2" y="215.7" width="2.95" height="6.24" fill="#d0d0d0"/><rect x="110.2" y="221.8" width="6.2" height="6.24" fill="#fffaf2"/><rect x="116.2" y="221.8" width="6.2" height="6.24" fill="#f0f0f0"/><rect x="122.2" y="221.8" width="6.2" height="6.24" fill="#e4e4e4"/><rect x="128.2" y="221.8" width="6.2" height="6.24" fill="#f4f4f4"/><rect x="134.2" y="221.8" width="6.2" height="6.24" fill="#f6f6f6"/><rect x="140.2" y="221.8" width="6.2" height="6.24" fill="#f4f4f6"/><rect x="146.2" y="221.8" width="6.2" height="6.24" fill="#f4f4f4"/><rect x="152.2" y="221.8" width="6.2" height="6.24" fill="#fafafa"/><rect x="158.2" y="221.8" width="6.2" height="6.24" fill="#ececec"/><rect x="164.2" y="221.8" width="6.2" height="6.24" fill="#eeeeee"/><rect x="170.2" y="221.8" width="6.2" height="6.24" fill="#ececec"/><rect x="176.2" y="221.8" width="2.95" height="6.24" fill="#e8e8e8"/><rect x="110.2" y="227.8" width="6.2" height="6.24" fill="#fff8ec"/><rect x="116.2" y="227.8" width="6.2" height="6.24" fill="#dcdcdc"/><rect x="122.2" y="227.8" width="6.2" height="6.24" fill="#c0c0c0"/><rect x="128.2" y="227.8" width="6.2" height="6.24" fill="#c8c8c8"/><rect x="134.2" y="227.8" width="6.2" height="6.24" fill="#d8d8d8"/><rect x="140.2" y="227.8" width="6.2" height="6.24" fill="#c8c8cc"/><rect x="146.2" y="227.8" width="6.2" height="6.24" fill="#c4bcc8"/><rect x="152.2" y="227.8" width="6.2" height="6.24" fill="#f0f0f0"/><rect x="110.2" y="233.9" width="6.2" height="6.24" fill="#fff0d8"/></g></g><rect x="110.300" y="86.400" width=".8" height="2" fill="#f8c070"/><rect x="119.200" y="86.400" width="6.600" height="1.600" fill="#fbd49a"/><rect x="179.200" y="218" width=".9" height="4.400" fill="#35507a"/><rect x="189.300" y="87" width=".7" height="148.200" fill="#d9dbe0"/><rect x="188.800" y="129" width="1.900" height="87.600" rx=".8" fill="#3a3f4f"/></svg>
<!-- map -->
<div style="position:absolute;left:199.8px;top:72.7px;width:347.1px;height:164.9px;background:#fff;box-shadow:0 .4px 1px rgba(0,0,0,.08);"></div><div style="position:absolute;left:199.8px;top:85.35000000000001px;width:347.1px;height:0.7px;background:#e0e2e6;"></div><div style="position:absolute;left:204.8px;top:74px;height:12px;line-height:12px;font-size:6px;color:#333;white-space:nowrap;"><i>地</i><i>图</i><i>信</i><i>息</i></div><svg style="left:202.800px;top:86.200px" width="341.800" height="148.800" viewBox="202.800 86.200 341.800 148.800"><rect x="202.800" y="86.200" width="341.800" height="148.800" fill="#f0f3fa"/><path d="M202.6 101.8 L209.5 100.6 L215.4 104.7 L221.3 102.9 L227.2 101.8 L232 101.8 L234.3 99.4" fill="none" stroke="#aed6fa" stroke-width="0.9" stroke-linejoin="round"/><path d="M247.4 111.8 L253.3 115.4 L261.6 117.2 L266.3 119.5 L275 118.5 L285 116" fill="none" stroke="#aed6fa" stroke-width="0.6" stroke-linejoin="round"/><path d="M285 116 L289.7 119.5 L296.8 116 L301.6 114.8 L306.3 118.3 L308.7 123.1 L311.1 129 L315.8 133.7 L319.3 136.7 L321.7 142.7 L324.1 148.6 L327.6 155.7 L332.4 162.8 L335.9 166.3 L338 170" fill="none" stroke="#aed6fa" stroke-width="0.9" stroke-linejoin="round"/><path d="M328.8 118.3 L334.7 119.5 L338.8 121.8 L340.7 126.5 L342.6 131.3 L345.5 135 L348.8 137" fill="none" stroke="#aed6fa" stroke-width="1.4" stroke-linejoin="round"/><path d="M308.5 121.8 L311.4 127.5 L315.2 132.2 L318.9 135 L319.9 139.8 L322.7 144.5 L326.5 149.3 L329.4 154 L331.3 157.8 L334 163 L337 168" fill="none" stroke="#aed6fa" stroke-width="1" stroke-linejoin="round"/><path d="M202.8 215 L205.25 211.75 L208.25 208.75 L212 206.1 L216.5 204.6 L220.25 203.5 L223.25 201.6 L224.75 202 L228.5 202.4 L233.75 203.5 L235.25 204.25 L237.5 202 L240.5 199 L242 196.75 L243.5 198.25 L245 200.1 L248 199.4 L252.5 198.25 L255.5 195.25 L258.3 192.9 L259.7 190.1 L256.9 188.7 L254 187.2 L260.4 189.4 L262.6 192.2 L263.3 195.8 L260.4 197.2 L264 196.5 L268.2 194.4 L269.7 192.9 L266.8 192.2 L264.7 192.2 L265.4 190.1 L271.1 188.7 L275.4 187.2 L278.2 185.8 L278.9 188.1 L281.5 190 L285.25 189.25 L288.25 187 L288.6 183.4 L289.75 184 L292.1 184.9 L295 187 L299.2 185.6 L300.6 182.7 L303.5 179.9 L306.3 177.8 L309.9 178.5 L312 182.7 L315.6 179.9 L317.7 177.1 L317 172.8 L319.1 170.7 L321.3 174.2 L324.1 177.1 L327.7 174.9 L331.9 174.2 L336.2 174.2 L339.7 172.1 L341.2 168.5 L341.9 166.4 L341.8 162.8 L344.2 159.2 L347.2 154.5 L345.4 152.1 L346 148.6 L347.8 143.8 L347.2 139.1 L347.6 135.8 L349 134.6 L351.3 136.7 L353.1 141.5 L355.5 145 L357.3 147.6 L358.9 149.6 L362.5 149.2 L366.3 148.3 L369.1 147.3 L369 148.6 L368.2 150.3 L363.4 151.3 L360.6 152.7 L358.5 155.2 L360 157.6 L363.5 157 L366 158.6 L369 160.2 L371.5 162.2 L374.5 162.4 L376 160.2 L377.2 157.2 L380 155.6 L379 152.6 L381 150.6 L380 148 L378.5 145.4 L382.3 144.1 L386.1 142.2 L389 140.3 L391.8 137.5 L395.6 136 L399.4 135.1 L400.3 133.2 L401.3 136.5 L399.4 138.4 L398.9 142.2 L399.4 145.5 L403.2 145.5 L406.5 147 L407.4 144.1 L409.8 141.3 L412.6 138.4 L413.1 136 L411.7 134.6 L415 135.3 L418.8 134.6 L422.6 133.6 L425.4 134.6 L427.8 136.9 L428.3 139.3 L432.1 140.3 L435.8 140.7 L438.7 141.7 L438.2 139.3 L439.6 137.4 L437.7 136.9 L436.8 135.1 L438.7 132.7 L441.5 131.3 L444.4 131.7 L447.2 133.6 L449.1 135.5 L449.6 137.4 L451.9 135.5 L454.8 134.6 L457.6 134.1 L460.5 132.7 L463.3 133.2 L466.2 131.7 L469 129.4 L471.8 127.5 L475.6 127 L479.4 127.5 L482.3 126.5 L484.6 124.2 L485.1 121.8 L484.6 118.3 L487 115.4 L490.5 113.6 L495.3 112.4 L494.1 107.7 L496.4 104.1 L500 100.6 L502.4 97 L504.7 95.8 L507.1 92.3 L509.5 89.9 L514.2 90.5 L517.8 89.9 L518.9 86.2 L544.6 86.2 L544.6 235 L202.8 235Z" fill="#9ecef8"/><path d="M427.3 134.8 L429 134.3 L431.1 135 L430.6 136.6 L428.2 136.9Z" fill="#9ecef8"/><path d="M503.6 101.8 L507.1 100.6 L511.8 101.8 L512.4 103.5 L508.3 103.5 L503.6 103Z" fill="#f0f3fa"/><path d="M521.3 86.2 L528.4 86.2 L528 88.4 L524 88.9 L521.5 88Z" fill="#f0f3fa"/><path d="M386 147.8 L389.5 146 L393 145.6 L392.5 147.6 L389.8 149 L391.5 150 L393.5 151.5 L392 153.2 L389 152.8 L388 150.5 L386.5 149.8Z" fill="#f0f3fa"/><path d="M370 163.4 L374 163 L377.5 163.6 L376 165.4 L371.5 165.4Z" fill="#f0f3fa"/><path d="M356.1 162.2 L360.8 160.4 L366.7 158.6 L367.9 160.4 L362 162.8 L357.2 164.6Z" fill="#f0f3fa"/><path d="M367.5 165.5 L369.2 166 L368.8 168 L367.3 167.4Z" fill="#f0f3fa"/><path d="M294.2 195.5 L297.1 191.3 L299.9 190.6 L299.2 194.1 L295.7 197Z" fill="#f0f3fa"/><path d="M302.8 190.6 L306.3 187.7 L310.6 187 L308.5 190.6 L307 194.1 L307.8 197 L304.9 195.5 L304.2 192Z" fill="#f0f3fa"/><path d="M326.9 178.5 L329.8 177.8 L330.2 180.6 L327.7 181Z" fill="#f0f3fa"/><path d="M322.7 182 L326.2 181.8 L326 183.2 L323.1 183.2Z" fill="#f0f3fa"/><path d="M317 181.3 L318.8 181.3 L318.8 182.7 L317 182.7Z" fill="#f0f3fa"/><path d="M349 177.1 L351.8 177.8 L351.1 179.2 L349 178.5Z" fill="#f0f3fa"/><path d="M355 171 L356.4 171.3 L356 172.4 L354.8 172Z" fill="#f0f3fa"/><path d="M349.5 177 L352 177.6 L351.3 179.2 L349.3 178.5Z" fill="#f0f3fa"/><path d="M352.3 174.3 L353.6 174.6 L353.3 175.6Z" fill="#f0f3fa"/><path d="M359.6 172.8 L361 173.2 L360.6 174.2Z" fill="#f0f3fa"/><path d="M357.5 166 L359.2 166.5 L358.6 167.8Z" fill="#f0f3fa"/><path d="M363 169 L364.3 169.4 L363.8 170.5Z" fill="#f0f3fa"/><path d="M343.5 176 L345 176.3 L344.6 177.4Z" fill="#f0f3fa"/><path d="M289.5 192.5 L290.8 192.2 L290.6 193.6Z" fill="#f0f3fa"/><path d="M311.5 194.5 L312.8 194.8 L312.3 195.8Z" fill="#f0f3fa"/><path d="M270.5 191.2 L272 190.8 L272.3 192Z" fill="#f0f3fa"/><path d="M277.5 197.8 L278.8 197.6 L278.5 198.8Z" fill="#f0f3fa"/><g fill="none" stroke="#f9dc9e" stroke-width=".5" stroke-linejoin="round"><path d="M202.6 105.3 L211.8 105.9 L223.7 104.1"/><path d="M255.7 123.7 L258 129 L255.7 133.7"/><path d="M271 87.5 L273.4 94.7 L277 99.4 L271 107.7 L267.5 109.5"/><path d="M285 99.4 L290.9 95.8 L296.8 91.1 L300.4 86.4"/><path d="M202.8 204.3 L208.5 202.2 L210 200.7"/><path d="M222.7 200.7 L231.3 198.6 L239.8 196.5 L246.9 193.6"/><path d="M215 140 L214 150 L216 160 L213 170 L214 181"/><path d="M236 150 L240 157 L246 158 L250 150"/><path d="M370 114.8 L373.6 116 L377.1 119.5"/><path d="M400 100 L396 106 L392 108"/><path d="M420 98 L424 104 L430 108 L438 112"/><path d="M408 124 L412 128 L418 131"/><path d="M448 110 L452 116 L450 122"/><path d="M470 108 L468 116 L470 124"/><path d="M345 90 L343 96 L345 102"/><path d="M310 96 L313 101 L311 108"/><path d="M296 141 L300 146 L299 152"/><path d="M312 158 L314 165 L312 172"/><path d="M268 160 L270 168 L268 176"/><path d="M244 113 L252 116 L262 118 L268 121"/></g><g fill="none" stroke="#f6be42" stroke-width=".62" stroke-linejoin="round"><path d="M300 95.9 L305.7 94.5 L311.4 91.7 L315.2 87.9 L316.1 86.2"/><path d="M318.9 88.8 L320.4 93.6 L324.6 98.3 L328.4 101.2 L331.3 104.9 L331.7 109.7"/><path d="M300 104.9 L305.7 107.8 L311.4 104.9 L317.1 102.1 L320.4 93.6"/><path d="M305.7 107.8 L312.3 108.7 L318.9 108.3 L324.6 108.7 L331.3 108.3 L337.9 107.3 L343.6 106.8 L349.3 104.9 L354.9 102.1 L360.6 98.3 L366.3 94.5 L372 91.7"/><path d="M327.5 86.2 L328.4 91.7 L330.3 95.5 L331.3 101.2 L331.3 104.9"/><path d="M337.9 86.2 L338.8 91.7 L337.4 97.4 L337.9 103.1 L337.9 107.3 L337.4 114.4 L337.9 125.8"/><path d="M347.4 87.9 L351.2 90.7 L349.3 94.5 L344.5 96.4 L339.8 100.2 L337.9 103.1"/><path d="M351.2 90.7 L356.8 91.7 L362.5 90.7 L368.2 92.6 L372 95.5"/><path d="M349.3 94.5 L354.9 96.4 L360.6 98.3 L364.4 103.1 L368.2 107.8 L370.1 113.5 L369.2 119.2 L372 123.9"/><path d="M343.6 106.8 L347.4 111.6 L351.2 116.3 L353.1 121.1 L356.8 125.8"/><path d="M337.9 114.4 L343.6 113.5 L349.3 114.4 L356.8 113.5 L364.4 112.5 L372 114.4"/><path d="M318.9 108.3 L318.5 114.4 L318.9 120.1 L318 125.8"/><path d="M324.6 108.7 L324.2 114.4 L324.6 120.1 L324.2 125.8"/><path d="M331.7 109.7 L332.2 116.3 L331.3 122 L332.2 125.8"/><path d="M300 109.7 L304.7 111.6 L309.5 110.6 L314.2 111.6 L318.9 114.4 L324.6 114.4 L332.2 116.3 L337.9 114.4"/><path d="M300 117.3 L305.7 118.2 L311.4 117.3 L318 120.1 L324.6 120.1 L331.3 122 L337.9 121.1 L343.6 122 L349.3 120.1 L353.1 121.1"/><path d="M360.6 98.3 L360.6 104.9 L361.6 110.6 L360.6 117.3 L358.7 123.9"/><path d="M354.9 102.1 L356.8 107.8 L356.8 113.5"/><path d="M311.4 104.9 L310.4 110.6 L311.4 117.3 L309.5 123.9"/><path d="M300 100.2 L303.8 98.3 L307.6 100.2 L311.4 104.9"/><path d="M300 123.7 L305.7 126.5 L312.3 125.6 L318.9 126.5 L324.6 124.6 L331.3 125.6 L337.9 124.6 L344.5 126.5 L351.2 124.6 L356.8 126.5 L364.4 124.6 L372 125.6"/><path d="M300 130.3 L306.6 131.3 L313.3 130.3 L318.9 130.3 L324.6 131.3 L331.3 130.3 L337.9 130.3 L343.6 130.3 L349.3 131.3 L356.8 130.3 L364.4 131.3 L372 130.3"/><path d="M300 136.9 L305.7 135 L311.4 136 L317.1 139.8 L322.7 136.9 L328.4 136 L333.2 135 L337.9 136.9 L342.6 138.800 L346.5 141"/><path d="M300 145.5 L305.7 146.4 L312.3 145.5 L318.9 146.4 L323.7 145.5 L330.3 145.5 L337.9 147.4 L345.2 147.4"/><path d="M301.9 118 L302.8 123.7 L301.9 130.3 L303.8 136.9 L302.8 145.5 L300.9 152.1"/><path d="M314.2 118 L313.3 123.7 L314.2 130.3 L317.1 139.8 L315.2 145.5 L312.3 151.2 L309.5 157.8"/><path d="M324.6 118 L324.6 124.6 L324.6 131.3 L322.7 136.9 L323.7 145.5 L325.6 151.2 L328.4 157.8"/><path d="M331.3 118 L331.3 125.6 L331.3 130.3 L333.2 135 L331.3 140.7 L330.3 145.5 L333.2 151.2 L336 157.8"/><path d="M337.9 118 L337.9 124.6 L337.9 130.3 L337.9 136.9 L339.8 142.6 L337.9 147.4 L341.7 152.1 L340.7 157.8"/><path d="M345.5 118 L344.5 126.5 L343.6 130.3 L342.6 138.8"/><path d="M351.2 124.6 L353.1 131.3 L354.9 136.9 L358.7 142.6 L362.5 146.4 L366.3 148.2"/><path d="M356.8 118 L356.8 126.5 L358.7 132.2 L362.5 136.9 L366.3 140.7 L370.1 144.5"/><path d="M364.4 118 L364.4 124.6 L366.3 131.3 L370.1 136 L372 137.9 L376 139 L381 139.5 L386 138.5"/><path d="M354.9 136.9 L360.6 136 L366.3 136.9 L372 135 L378 134.5 L384 135.5 L390 134"/><path d="M300 152.1 L306.6 150.2 L312.3 151.2 L318.9 150.2 L325.6 151.2 L333.2 151.2 L341.7 152.1"/><path d="M318.9 126.5 L318.9 130.3 L319.9 135 L318.9 140.7 L318.9 146.4 L318.9 150.2"/><path d="M306.6 131.3 L307.6 136.9 L305.7 146.4"/><path d="M372 114.4 L378 113 L384 115 L390 113.5"/><path d="M372 104 L378 106 L384 104.5 L388 105.3"/><path d="M382 86.2 L383 93 L381.5 100 L383 108 L382 116 L383 124"/><path d="M372 125.6 L378 126.8 L384 126 L389 127"/><path d="M372 130.3 L378 131 L384 130.6 L390 131.5"/><path d="M370 139 L371.5 143 L374 146"/><path d="M376 146 L380 144.5 L385 143"/><path d="M484.2 86.4 L485.2 91.6 L482.3 96.3 L478.5 101.1 L474.7 103 L470 102"/><path d="M485.2 91.6 L490.9 94.4 L493.7 97.3 L494.6 102 L493.7 107.7 L489 112.4 L485.2 116.2 L484.2 123.8"/><path d="M478.5 101.1 L482.3 103 L487.1 105.8 L489 112.4"/><path d="M482.3 96.3 L487.1 98.2 L493.7 97.3 L500.3 92.5 L506 89.7 L512.7 88.3 L518.3 87.8"/><path d="M474.7 103 L475.7 108.6 L474.7 115.3 L475.7 123.8"/><path d="M470 107.7 L475.7 108.6 L482.3 110.5 L489 112.4"/><path d="M482.3 103 L483.3 108.6 L482.3 110.5 L484.2 116.2"/><path d="M470 115.3 L474.7 115.3 L479.5 117.2 L484.2 116.2"/><path d="M490.9 94.4 L491.8 89.7 L493.7 87.8 L501.3 88.3 L507.9 86.8"/><path d="M470 90.6 L475.7 93.5 L479.5 95.4 L482.3 96.3"/><path d="M285 125.4 L290 128 L296 129.5 L300 130.3"/><path d="M354 141.5 L358 140.5 L362 141.5 L366 140.8 L370 142 L375 141.2 L380 142.2 L385 141"/><path d="M355.5 144.5 L360 144 L364 145.5 L368 145 L372 146.5"/><path d="M358 138 L359.5 142 L359 146"/><path d="M363 137 L364 141 L363.5 146.5"/><path d="M371 138 L372 142 L371.5 146"/><path d="M377 138.5 L378 142 L377.5 145"/><path d="M383 137.5 L383.5 141 L383 143.5"/><path d="M356 147.2 L360 146.8 L364 147.6 L368 147"/><path d="M360 153 L363 154.5 L366 156 L369 158.5 L372 160.5"/><path d="M361 156 L365 155.5 L369 155 L373 154 L377 155"/><path d="M366 151 L367 154 L366.5 157"/><path d="M370 150.5 L371 154 L372.5 157.5 L373 160"/><path d="M374 151 L376 153.5 L376.5 157"/><path d="M357.5 163.5 L361 162 L365 160.5 L367 159.5"/><path d="M285 145 L290 146.5 L296 145 L300 145.5"/><path d="M290 107.7 L291 113 L290 119 L291.5 124.3"/><path d="M296 113 L297 119 L296 125 L297.5 131 L296 137"/></g><g fill="none" stroke="#f6be42" stroke-width=".76" stroke-linejoin="round" stroke-linecap="round"><path d="M202.6 94.7 L207.1 93.5 L211.8 95.3 L220.1 95.8 L229 95.3 L231 97.6"/><path d="M231 103.5 L229.6 107.7 L225.5 117.2 L221.9 126.6 L221.3 133.7 L221.9 132 L221.3 139.1 L220.1 147.4 L220.1 155.7 L218.9 160.4 L218.4 167.5 L217.8 181.7"/><path d="M202.6 108.9 L211.8 109.5 L221.3 107.1 L230.8 105.3"/><path d="M227.8 86.4 L228.4 91.1 L230.8 98.2 L231 103.5"/><path d="M245.6 86.4 L241.4 91.1 L239.1 99.4 L236.7 105.3 L239.1 109.5 L245 110.6 L249.7 107.7 L247.4 101.8 L243.8 99.4 L239.1 99.4 L234.5 100.5"/><path d="M261.6 86.4 L258 95.8 L252.1 105.3 L249.7 107.7"/><path d="M249.7 107.7 L255.7 112.4 L264 113 L271.1 110.6 L280.5 113 L290 107.7 L294.5 107.7 L305.1 107.7 L314.6 108.9 L324.1 107.7 L332.4 108.3 L341.8 108.9 L351.3 106.5 L360.8 101.8 L367.9 95.8 L375 91.1"/><path d="M245 110.6 L249.7 118.3 L255.7 123.7 L266.3 125.4 L275.8 126 L282.9 127.8 L290 124.9 L293.3 124.3 L301.6 126.6 L308.7 125.4 L315.8 127.8 L320.5 133.7"/><path d="M280.5 113 L278.8 119.5 L277.6 125.4 L278.2 133.7 L277 137.3 L273.4 143.8 L268.7 148.6 L262.8 152.1"/><path d="M202.6 131.4 L209.5 129.6 L221.3 128.8 L230.8 129.6 L237.9 130.8 L241.4 134.4 L247.4 135 L253.9 136.7 L261.6 137.3 L271.1 135.6 L277 137.3 L282.9 137.9 L290 137.3 L285 139.1 L289.7 140.3 L296.8 135.6 L300.4 132"/><path d="M281.1 86.4 L282.9 91.1 L290 97 L295.7 102.9 L305.1 107.7 L314.6 101.8 L319.3 94.7 L318.8 89.3"/><path d="M285 116 L292.1 118.3 L300.4 113.6 L308.7 112.4 L318.2 114.8 L325.3 116"/><path d="M318.8 89.3 L320.5 95.8 L319.3 104.1 L318.2 114.8 L317 124.3 L318.2 133.7 L317 132 L315.8 140.3 L313.4 145 L307.5 149.8 L300.4 153.3 L293.3 156.9 L285 160.4"/><path d="M332.4 86.4 L331.8 95.8 L333 105.3 L332.4 114.8 L332.4 124.3 L333.6 133.7 L334.7 137.9 L337.1 145"/><path d="M326.4 86.4 L327.6 93.5 L325.9 101.8 L326.4 111.2 L325.3 116 L325.9 124.3 L326.4 133.7 L325.3 137.9 L330 143.8"/><path d="M338.9 86.4 L338.3 94.7 L337.1 103 L337.7 111.2 L338.3 119.5 L337.1 129 L338.3 133.7 L343 139.1 L344.2 147.4"/><path d="M349 86.4 L351.3 92.3 L346.6 98.2 L341.8 101.8 L337.1 103"/><path d="M351.3 92.3 L358.4 97 L365.5 104.1 L370.3 111.2 L372.6 119.5 L371.4 129 L375 133.7"/><path d="M341.8 108.9 L346.6 114.8 L351.3 121.9 L356.1 126.6 L360.8 133.7 L356.1 139.1 L360.8 146.2 L365.5 148.6 L370.3 146.2 L375 143.8"/><path d="M338.3 119.5 L346.6 118.3 L356.1 119.5 L365.5 117.2 L375 119.5 L377.1 119.5"/><path d="M349 86.4 L358.4 88.7 L367.9 87.6 L375 93.5 L370 93.5 L377.1 97 L385.4 98.2 L393.7 95.8 L402 97.6 L411.4 98.2 L417.4 95.8 L426.8 94.1 L436.3 93.5 L444.6 92.9"/><path d="M325.3 124.3 L332.4 124.3 L338.3 124.9 L346.6 125.4 L351.3 121.9"/><path d="M318.2 119.5 L325.3 120.1 L332.4 119.5 L338.3 119.5"/><path d="M360.8 101.8 L360.8 110.1 L363.2 119.5 L360.8 129 L358.4 133.7 L356.1 132 L362 137.9 L367.9 142.7 L375 140.3"/><path d="M305.1 107.7 L303.9 116 L301.6 126.6 L302.8 133.7"/><path d="M295.7 103 L300.4 95.8 L307.5 91.1 L313.4 86.4"/><path d="M308.7 112.4 L311.1 119.5 L308.7 126.6 L312.2 133.7"/><path d="M411.4 98.2 L403.2 104.1 L398.4 110.1 L393.7 117.2 L391.3 121.9 L386.6 124.3"/><path d="M377.7 86.4 L378.3 93.5 L377.1 101.8 L378.3 111.2 L377.1 119.5 L378.3 129 L379.5 133.7 L378 138 L375 141"/><path d="M395.5 86.4 L393.7 92.3 L389 97 L387.8 105.3 L388.4 114.8 L389 123.1 L387.8 133.7 L385 138 L380 141"/><path d="M370 123.1 L377.1 124.3 L386.6 124.3 L393.7 122.5 L403.2 123.1 L411.4 124.3 L417.4 126.6 L424.5 124.3 L434 121.9 L443.4 124.3 L452.9 125.4 L460 126 L462.1 125.4 L469.2 124.9 L476.3 123.1 L482.2 120.7 L484.6 118.3"/><path d="M444.6 86.4 L444.6 92.9 L445.8 101.8 L445.8 106.5 L439.9 113.6 L435.1 119.5 L434 121.9 L434.5 129 L434 131.4"/><path d="M444.6 92.9 L450.5 99.4 L455.3 101.8 L460 101.2 L462.1 100.6 L469.2 99.4 L476.3 101.8 L483.4 98.2 L490.5 97 L495.3 94.7 L502.4 91.1 L509.5 88.7 L518 87.6"/><path d="M445.8 106.5 L452.9 104.1 L460 101.8"/><path d="M417.4 86.4 L417.4 95.8"/><path d="M436.3 93.5 L441.1 89.9 L444.6 86.4"/><path d="M370 130.2 L379.5 131.4 L386.6 129 L393.7 130.2 L394.9 133.7 L398 135.2 L405 134 L412 133.6 L418 133 L425 131.6 L428 132.2"/><path d="M393.7 122.5 L394.9 129 L394.3 133.7"/><path d="M460 112.4 L457.6 118.3 L456.4 125.4"/><path d="M466.8 87.6 L470.4 91.1 L478.7 92.3 L483.4 95.8 L483.4 98.2 L485.8 104.1 L486.4 111.2 L484.6 118.3"/><path d="M455 107.7 L460.9 105.3 L466.8 103 L469.2 99.4"/><path d="M466.8 103 L476.3 107.7 L485.8 111.2 L494.1 107.7"/><path d="M460.9 105.3 L462.1 112.4 L459.7 119.5 L455 124.3"/><path d="M466.8 86.4 L465.7 93.5 L462.1 100.6"/><path d="M476.3 107.7 L475.1 114.8 L476.3 123.1 L475.1 127.5"/><path d="M483.4 86.4 L484.6 91.1 L490.5 97 L494.1 100.6 L494.1 107.7"/><path d="M455 94.7 L459.7 92.3 L466.8 87.6"/><path d="M202.6 165.2 L209.5 162.8 L218.9 160.4 L227.2 156.9 L234.3 153.9 L241.4 147.4 L247.4 143.8 L252.1 140.3 L253.9 136.7 L253.3 132 L255.7 123.7"/><path d="M253.9 136.7 L255.7 142.7 L260.4 146.2 L262.8 152.1 L260.4 160.4 L256.8 166.3 L252.1 168.7 L245 173.4 L237.9 178.2 L233.2 181.7 L228.4 184.4 L222.7 186.5 L222.7 193.6"/><path d="M260.4 160.4 L267.5 157.5 L275.8 155.7 L282.9 156.9 L290 157.5 L293.3 156.9 L301.6 158 L308.7 155.7 L315.8 154.5 L321.7 152.1 L324.1 147.4 L322.9 145 L315.8 145"/><path d="M290 158 L285.3 162.8 L281.7 168.7 L278.2 175.8 L271.1 179.4 L266.3 181.7 L262.6 180.8"/><path d="M256.8 166.3 L258 171.1 L261.6 177 L264 181.7 L262.6 180.8 L262.6 186.5 L263.3 192.2"/><path d="M288.2 139.1 L288.8 145 L290 149.8 L292.1 147.4 L293.3 156.9"/><path d="M289.7 140.3 L292.1 147.4"/><path d="M308.7 155.7 L307.5 162.8 L308.7 169.9 L306.3 178.2 L304 180.5"/><path d="M321.7 152.1 L325.3 156.9 L330 161.6 L334.7 165.2 L340.7 166.3"/><path d="M319.3 165.2 L326.4 164 L332.4 162.8 L337.1 161.6 L340.7 166.3 L346.6 164 L352.5 161.6 L358.4 159.8 L365.5 158.6"/><path d="M322.9 145 L330 143.8 L337.1 145 L344.2 147.4 L347 147.4"/><path d="M330 143.8 L328.8 149.8 L332.4 155.7 L337.1 161.6"/><path d="M337.1 145 L340.7 151 L339.5 156.9 L337.1 161.6"/><path d="M324.1 132 L325.3 137.9 L330 143.8"/><path d="M319.3 165.2 L322.9 171.1 L322.9 175.8"/><path d="M353.5 141.3 L358 143.5 L363 144.2 L368 143 L373 144 L378 143 L384 141.5 L389 138.5 L394 136 L399 135"/><path d="M362 150.8 L366 153 L370 156 L373 160"/><path d="M366 153 L372 152 L377 153"/><path d="M202.8 190.1 L208.5 188 L214.2 185.1 L218.5 180.8 L219.2 178"/><path d="M202.8 199.3 L210 195.8 L218.5 193.6 L222.7 193.6 L231.3 192.2 L239.8 192.2 L246.9 189.4 L252.6 185.1 L259.7 182.3 L262.6 180.8 L266.8 178"/><path d="M228.4 184.4 L232.7 183.7 L238.4 180.8 L242.7 178"/><path d="M232.7 183.7 L234.1 189.4 L231.3 192.2"/><path d="M262.6 180.8 L271.1 183 L276.8 183.7 L282.5 181.6 L290 180.1 L296 181 L301 180"/></g><path d="M252.1 86.4 L249.7 89.9 L245 91.1 L243.8 97 L240.3 101.8 L239.1 110.1 L240.9 117.2 L242 121.9 L239.1 129 L235.5 133.7 L233.2 136.7 L226.1 139.1 L221.3 143.8 L211.8 146.2 L207.1 152.1 L208.9 158 L211.3 160.4 L204.7 164 L202.8 166.3" fill="none" stroke="#a9adb5" stroke-width=".45"/><path d="M357.500 150.500 L357.200 160 L355.800 163.500 L358 166.500 L372 167 L386 167.500 L387.500 160 L386 150 L383.800 146.500 L378.500 146" fill="none" stroke="#6b7a8c" stroke-width=".4" stroke-dasharray="1.200 .9"/><path d="M518.900 100 L523.700 109.500" stroke="#7f8c9a" stroke-width=".35"/><circle cx="458.200" cy="223.100" r="2.100" fill="none" stroke="#e6eefa" stroke-width=".5" stroke-dasharray="1 .7"/><circle cx="234.9" cy="99.4" r="1.150" fill="#e25d58"/><circle cx="271.1" cy="128.1" r="1.150" fill="#e25d58"/><circle cx="319.1" cy="89" r="1.150" fill="#e25d58"/><circle cx="351.7" cy="122.5" r="1.150" fill="#e25d58"/><circle cx="383.4" cy="118.1" r="1.150" fill="#e25d58"/><circle cx="429.2" cy="134.9" r="1.150" fill="#e25d58"/><circle cx="476.1" cy="95.5" r="1.150" fill="#e25d58"/><circle cx="488.2" cy="89.9" r="1.150" fill="#e25d58"/><circle cx="267.9" cy="181.3" r="1.150" fill="#e25d58"/><circle cx="217.8" cy="191.5" r="1.150" fill="#e25d58"/><circle cx="334.7" cy="148.6" r="1.150" fill="#e25d58"/><circle cx="367.6" cy="140.9" r="1.150" fill="#e25d58"/><circle cx="328.500" cy="116.900" r="1.700" fill="#f19c96"/><circle cx="328.500" cy="116.900" r=".9" fill="#e25d58"/><circle cx="341.8" cy="166.6" r="1.700" fill="#f19c96"/><circle cx="341.8" cy="166.6" r=".9" fill="#e25d58"/><circle cx="373.2" cy="161" r="1.700" fill="#f19c96"/><circle cx="373.2" cy="161" r=".9" fill="#e25d58"/></svg><div style="position:absolute;left:235px;top:89px;height:12px;line-height:12px;font-size:5.2px;color:#666a72;text-shadow:0 0 1px #fff,0 0 1px #fff,0 0 1px #fff;transform:translateX(-50%);white-space:nowrap;"><i>梧</i><i>州</i></div><div style="position:absolute;left:271.1px;top:118px;height:12px;line-height:12px;font-size:5.2px;color:#666a72;text-shadow:0 0 1px #fff,0 0 1px #fff,0 0 1px #fff;transform:translateX(-50%);white-space:nowrap;"><i>云</i><i>浮</i></div><div style="position:absolute;left:351.9px;top:113px;height:12px;line-height:12px;font-size:5.2px;color:#666a72;text-shadow:0 0 1px #fff,0 0 1px #fff,0 0 1px #fff;transform:translateX(-50%);white-space:nowrap;"><i>东</i><i>莞</i></div><div style="position:absolute;left:383.9px;top:108px;height:12px;line-height:12px;font-size:5.2px;color:#666a72;text-shadow:0 0 1px #fff,0 0 1px #fff,0 0 1px #fff;transform:translateX(-50%);white-space:nowrap;"><i>惠</i><i>州</i></div><div style="position:absolute;left:428.8px;top:125px;height:12px;line-height:12px;font-size:5.2px;color:#666a72;text-shadow:0 0 1px #fff,0 0 1px #fff,0 0 1px #fff;transform:translateX(-50%);white-space:nowrap;"><i>汕</i><i>尾</i></div><div style="position:absolute;left:469px;top:90px;height:12px;line-height:12px;font-size:5.2px;color:#666a72;text-shadow:0 0 1px #fff,0 0 1px #fff,0 0 1px #fff;transform:translateX(-50%);white-space:nowrap;"><i>揭</i><i>阳</i></div><div style="position:absolute;left:495.3px;top:84px;height:12px;line-height:12px;font-size:5.2px;color:#666a72;text-shadow:0 0 1px #fff,0 0 1px #fff,0 0 1px #fff;transform:translateX(-50%);white-space:nowrap;"><i>潮</i><i>州</i></div><div style="position:absolute;left:267.8px;top:172px;height:12px;line-height:12px;font-size:5.2px;color:#666a72;text-shadow:0 0 1px #fff,0 0 1px #fff,0 0 1px #fff;transform:translateX(-50%);white-space:nowrap;"><i>阳</i><i>江</i></div><div style="position:absolute;left:217.8px;top:182px;height:12px;line-height:12px;font-size:5.2px;color:#666a72;text-shadow:0 0 1px #fff,0 0 1px #fff,0 0 1px #fff;transform:translateX(-50%);white-space:nowrap;"><i>茂</i><i>名</i></div><div style="position:absolute;left:334.7px;top:139px;height:12px;line-height:12px;font-size:5.2px;color:#666a72;text-shadow:0 0 1px #fff,0 0 1px #fff,0 0 1px #fff;transform:translateX(-50%);white-space:nowrap;"><i>中</i><i>山</i></div><div style="position:absolute;left:368.6px;top:131px;height:12px;line-height:12px;font-size:5.2px;color:#666a72;text-shadow:0 0 1px #fff,0 0 1px #fff,0 0 1px #fff;transform:translateX(-50%);white-space:nowrap;"><i>深</i><i>圳</i></div><div style="position:absolute;left:329.2px;top:108px;height:12px;line-height:12px;font-size:5.9px;color:#3c3c3c;font-weight:bold;text-shadow:0 0 1px #fff,0 0 1px #fff,0 0 1px #fff;transform:translateX(-50%);white-space:nowrap;"><i>广</i><i>州</i></div><div style="position:absolute;left:381.1px;top:156px;height:12px;line-height:12px;font-size:5.6px;color:#3c3c3c;font-weight:bold;text-shadow:0 0 1px #fff,0 0 1px #fff,0 0 1px #fff;transform:translateX(-50%);white-space:nowrap;"><i>香</i><i>港</i></div><div style="position:absolute;left:342.5px;top:166px;height:12px;line-height:12px;font-size:5.6px;color:#3c3c3c;font-weight:bold;text-shadow:0 0 1px #fff,0 0 1px #fff,0 0 1px #fff;transform:translateX(-50%);white-space:nowrap;"><i>澳</i><i>门</i></div><div style="position:absolute;left:481.4px;top:218px;height:11px;line-height:11px;font-size:3.9px;color:#5f7186;transform:translateX(-50%);white-space:nowrap;"><i>东</i><i>沙</i><i>群</i><i>岛</i></div><svg style="left:369px;top:142px" width="9.600" height="12.400" viewBox="0 0 19.200 24.800"><path d="M9.600 .6a9 9 0 0 1 9 9c0 5-4.500 8.500-9 14.600C5.100 18.100 .6 14.600 .6 9.600a9 9 0 0 1 9-9z" fill="#12978a"/><circle cx="9.600" cy="9.400" r="5.600" fill="#8ed6c8"/><circle cx="9.600" cy="9.400" r="2.600" fill="#c9efe7" stroke="#4fb8a8" stroke-width="1"/></svg><div style="position:absolute;left:508.3px;top:90.9px;width:31.8px;height:8.8px;background:#fff;box-shadow:.6px .6px 1.200px rgba(0,0,0,.35);border-radius:.8px;"></div><div style="position:absolute;left:508.3px;top:90.9px;width:15.4px;height:8.8px;background:#8ea8e0;border-radius:.8px 0 0 .8px;"></div><div style="position:absolute;left:516px;top:90px;height:12px;line-height:12px;font-size:5.2px;color:#fff;font-weight:bold;transform:translateX(-50%);white-space:nowrap;"><i>地</i><i>图</i></div><div style="position:absolute;left:531.9px;top:90px;height:12px;line-height:12px;font-size:5.2px;color:#222;font-weight:bold;transform:translateX(-50%);white-space:nowrap;"><i>混</i><i>合</i></div><div style="position:absolute;left:531.7px;top:74.1px;width:10.6px;height:10.3px;background:#fff;border:.6px solid #e6e6e6;border-radius:1.200px;"></div><svg style="left:534px;top:76.300px" width="6.400" height="6" viewBox="0 0 13 12"><path d="M.6 3V.6H3M5 .6h3M10 .6h2.400V3M12.400 5v2M12.400 9v2.400H10M8 11.400H5M3 11.400H.6V9M.6 7V5" fill="none" stroke="#444" stroke-width="1.100"/><path d="M3 8.500l2.500-3 2 2 2.500-3" fill="none" stroke="#888" stroke-width=".9"/></svg><svg style="left:204.600px;top:213.600px" width="31" height="12" viewBox="0 0 62 24"><g fill="#2932e1" stroke="#fff" stroke-width="1.400" paint-order="stroke"><ellipse cx="24" cy="9.500" rx="2.300" ry="3"/><ellipse cx="29.500" cy="5.500" rx="2.300" ry="3"/><ellipse cx="35" cy="9.500" rx="2.300" ry="3" transform="rotate(0)"/><ellipse cx="32.500" cy="3.500" rx="0" ry="0"/><ellipse cx="37.500" cy="14" rx="2" ry="2.700"/><ellipse cx="21.500" cy="14" rx="2" ry="2.700"/><path d="M29.500 10.500c3 0 6.500 5 6.500 8.500 0 3-2.500 3.800-6.500 3.800S23 22 23 19c0-3.500 3.500-8.500 6.500-8.500z"/></g><text x="0" y="21.500" font-family="Liberation Sans,sans-serif" font-weight="bold" font-size="15.500" fill="#e02020" stroke="#fff" stroke-width="1.600" paint-order="stroke" textLength="20" lengthAdjust="spacingAndGlyphs">Bai</text><text x="26.300" y="20.800" font-family="Liberation Sans,sans-serif" font-weight="bold" font-size="6" fill="#fff">du</text><rect x="40.500" y="12.500" width="20" height="9.500" rx="1" fill="#e02020"/></svg><div style="position:absolute;left:229.85px;top:216px;height:11px;line-height:11px;font-size:4.3px;color:#fff;font-weight:bold;transform:translateX(-50%);white-space:nowrap;"><i>百</i><i>度</i></div><div style="position:absolute;left:202.8px;top:227.7px;width:270.4px;height:6.8px;background:rgba(255,255,255,.68);"></div><div style="position:absolute;left:204.3px;top:226px;height:12px;line-height:12px;font-size:5.07px;color:#1c1c1c;white-space:nowrap;">© 2024 Baidu - GS(2023)3206<i>号</i> - <i>甲</i><i>测</i><i>资</i><i>字</i>11111342 - <i>京</i>ICP<i>证</i>030173<i>号</i> - Data © <i>百</i><i>度</i><i>智</i><i>图</i> &amp; <span style="color:#6c6cd6">OpenStreetMap</span> &amp; <span style="color:#6c6cd6">HERE</span></div>
<!-- device info -->
<div style="position:absolute;left:551.7px;top:72.5px;width:247px;height:165.4px;background:#fff;box-shadow:0 .4px 1px rgba(0,0,0,.08);"></div><div style="position:absolute;left:551.7px;top:84.85000000000001px;width:247px;height:0.7px;background:#e0e2e6;"></div><div style="position:absolute;left:556.7px;top:74px;height:12px;line-height:12px;font-size:6px;color:#333;white-space:nowrap;"><i>设</i><i>备</i><i>信</i><i>息</i></div><div style="position:absolute;left:555.9px;top:90px;height:12px;line-height:12px;font-size:6px;color:#333;font-weight:bold;white-space:nowrap;"><i>设</i><i>备</i><i>名</i><i>称</i>:</div><div style="position:absolute;left:589px;top:90px;height:12px;line-height:12px;font-size:6.05px;color:#444;white-space:nowrap;"><i>冷</i><i>库</i><span style="font-size:1.1em">1</span>-<i>生</i><i>鲜</i></div><div style="position:absolute;left:555.9px;top:104px;height:12px;line-height:12px;font-size:6px;color:#333;font-weight:bold;white-space:nowrap;"><i>设</i><i>备</i><i>地</i><i>址</i>:</div><div style="position:absolute;left:555.9px;top:118px;height:12px;line-height:12px;font-size:6px;color:#333;font-weight:bold;white-space:nowrap;"><i>所</i><i>属</i><i>区</i><i>域</i>:</div><div style="position:absolute;left:589px;top:118px;height:12px;line-height:12px;font-size:6.05px;color:#444;white-space:nowrap;"><i>冷</i><i>链</i><i>运</i><i>输</i></div><div style="position:absolute;left:555.9px;top:132px;height:12px;line-height:12px;font-size:6px;color:#333;font-weight:bold;white-space:nowrap;"><i>报</i><i>警</i><i>数</i><i>据</i>:</div><div style="position:absolute;left:589px;top:132px;height:12px;line-height:12px;font-size:6.05px;color:#444;white-space:nowrap;"><i>开</i></div><div style="position:absolute;left:555.9px;top:146px;height:12px;line-height:12px;font-size:6px;color:#333;font-weight:bold;white-space:nowrap;"><i>报</i><i>警</i><i>类</i><i>型</i>:</div><div style="position:absolute;left:589px;top:146px;height:12px;line-height:12px;font-size:6.05px;color:#444;white-space:nowrap;"><i>离</i><i>线</i><i>报</i><i>警</i><i>、</i><i>超</i><i>限</i><i>报</i><i>警</i></div><div style="position:absolute;left:555.9px;top:160px;height:12px;line-height:12px;font-size:6px;color:#333;font-weight:bold;white-space:nowrap;"><i>标</i><i>记</i><i>位</i><i>置</i>:</div><div style="position:absolute;left:589px;top:160px;height:12px;line-height:12px;font-size:6.05px;color:#444;white-space:nowrap;"><i>开</i><i>启</i></div><div style="position:absolute;left:555.9px;top:174px;height:12px;line-height:12px;font-size:6px;color:#333;font-weight:bold;white-space:nowrap;"><i>离</i><i>线</i><i>判</i><i>断</i><i>间</i><i>隔</i>:</div><div style="position:absolute;left:601.2px;top:174px;height:12px;line-height:12px;font-size:6.05px;color:#444;white-space:nowrap;"><span style="font-size:1.1em">30</span><i>分</i><i>钟</i></div><div style="position:absolute;left:555.9px;top:188px;height:12px;line-height:12px;font-size:6px;color:#333;font-weight:bold;white-space:nowrap;"><i>保</i><i>存</i><i>数</i><i>据</i><i>间</i><i>隔</i>:</div><div style="position:absolute;left:601.2px;top:188px;height:12px;line-height:12px;font-size:6.05px;color:#444;white-space:nowrap;"><span style="font-size:1.1em">5</span><i>分</i><i>钟</i></div><div style="position:absolute;left:588.500px;top:105.400px;width:29.800px;height:7.500px;filter:blur(.5px);background:linear-gradient(90deg,#e6e8ec,#d8dade 30%,#e2e4e8 60%,#d4d6da 80%,#e8eaee);"></div><div style="position:absolute;left:560.7px;top:201px;height:12px;line-height:12px;font-size:6px;color:#333;white-space:nowrap;"><i>摄</i><i>像</i><i>头</i><i>信</i><i>息</i></div><div style="position:absolute;left:556.2px;top:213.3px;width:239.7px;height:0.6px;background:#e4e4e4;"></div><div style="position:absolute;left:675.6px;top:220px;height:12px;line-height:12px;font-size:6px;color:#333;transform:translateX(-50%);white-space:nowrap;"><i>暂</i><i>无</i><i>摄</i><i>像</i><i>头</i><i>信</i><i>息</i></div><div style="position:absolute;left:772.2px;top:73.3px;width:10.6px;height:11.2px;background:#fff;border:.6px solid #e4e4e4;border-radius:1.200px;"></div><div style="position:absolute;left:784.6px;top:73.3px;width:10.9px;height:11.2px;background:#fff;border:.6px solid #e4e4e4;border-radius:1.200px;"></div><svg style="left:774.200px;top:76.700px" width="7.100" height="6.200" viewBox="0 0 16 14"><g fill="#333" fill-rule="evenodd"><path d="M10.62 6.11 L10.62 7.89 L9.34 7.92 L8.87 9.06 L9.75 9.99 L8.49 11.25 L7.56 10.37 L6.42 10.84 L6.39 12.12 L4.61 12.12 L4.58 10.84 L3.44 10.37 L2.51 11.25 L1.25 9.99 L2.13 9.06 L1.66 7.92 L0.38 7.89 L0.38 6.11 L1.66 6.08 L2.13 4.94 L1.25 4.01 L2.51 2.75 L3.44 3.63 L4.58 3.16 L4.61 1.88 L6.39 1.88 L6.42 3.16 L7.56 3.63 L8.49 2.75 L9.75 4.01 L8.87 4.94 L9.34 6.08Z M7.50 7.00 a2 2 0 1 0 -4 0 a2 2 0 1 0 4 0Z"/><path d="M15.72 2.77 L15.72 4.23 L14.91 4.25 L14.41 5.13 L14.79 5.83 L13.52 6.56 L13.11 5.88 L12.09 5.88 L11.68 6.56 L10.41 5.83 L10.79 5.13 L10.29 4.25 L9.48 4.23 L9.48 2.77 L10.29 2.75 L10.79 1.87 L10.41 1.17 L11.68 0.44 L12.09 1.12 L13.11 1.12 L13.52 0.44 L14.79 1.17 L14.41 1.87 L14.91 2.75Z M13.80 3.50 a1.2 1.2 0 1 0 -2.4 0 a1.2 1.2 0 1 0 2.4 0Z"/><path d="M15.72 9.77 L15.72 11.23 L14.91 11.25 L14.41 12.13 L14.79 12.83 L13.52 13.56 L13.11 12.88 L12.09 12.88 L11.68 13.56 L10.41 12.83 L10.79 12.13 L10.29 11.25 L9.48 11.23 L9.48 9.77 L10.29 9.75 L10.79 8.87 L10.41 8.17 L11.68 7.44 L12.09 8.12 L13.11 8.12 L13.52 7.44 L14.79 8.17 L14.41 8.87 L14.91 9.75Z M13.80 10.50 a1.2 1.2 0 1 0 -2.4 0 a1.2 1.2 0 1 0 2.4 0Z"/></g></svg><svg style="left:786.300px;top:77px" width="7.800" height="5" viewBox="0 0 16 12"><rect x=".8" y=".8" width="14.400" height="10.400" fill="none" stroke="#444" stroke-width="1.300"/><path d="M3.500 3.500h3M3.500 6h3M3.500 8.500h3M9 3.500h3.500v5H9z" stroke="#444" stroke-width="1" fill="none"/></svg>
<!-- factor panel -->
<div style="position:absolute;left:91.3px;top:242.7px;width:707.4px;height:177.3px;background:#fff;box-shadow:0 .4px 1px rgba(0,0,0,.08);"></div><div style="position:absolute;left:91.3px;top:257.15px;width:707.4px;height:0.7px;background:#e0e2e6;"></div><div style="position:absolute;left:96.3px;top:245px;height:12px;line-height:12px;font-size:6px;color:#333;white-space:nowrap;"><i>因</i><i>子</i><i>信</i><i>息</i></div><div style="position:absolute;left:771.1px;top:245.1px;width:10.5px;height:10.3px;background:#fff;border:.6px solid #e4e4e4;border-radius:1.200px;"></div><div style="position:absolute;left:784.2px;top:245.1px;width:10.5px;height:10.3px;background:#fff;border:.6px solid #e4e4e4;border-radius:1.200px;"></div><svg style="left:774px;top:248.300px" width="5" height="4.400" viewBox="0 0 10 9"><path d="M0 1h10M0 4.500h10M0 8h10" stroke="#333" stroke-width="1.700"/></svg><svg style="left:786.500px;top:247.600px" width="6" height="5.600" viewBox="0 0 12 11"><rect x=".6" y=".6" width="10.800" height="9.800" fill="none" stroke="#555" stroke-width="1" stroke-dasharray="2 1.200"/><path d="M2.500 3h3M7 3h2.500M2.500 8l2.500-2.500 2 1.500 2.500-2" stroke="#777" stroke-width=".9" fill="none"/></svg><svg width="0" height="0" style="left:0;top:0"><defs><g id="rt"><rect x="-6.700" y=".9" width="13.400" height="5.700" rx="1" fill="#fff"/><circle cx="-4.400" cy="3.800" r=".65" fill="#43a667"/><circle cx="-2.400" cy="3.800" r=".65" fill="#43a667"/><path d="M0 1.200V-1.200" stroke="#fff" stroke-width="1.100"/><path d="M-2.900 -.6a2.900 2.900 0 0 1 5.800 0M-5.300 -.9a5.300 5.300 0 0 1 10.600 0" fill="none" stroke="#fff" stroke-width="1.150" stroke-linecap="round"/></g><g id="sr"><circle cx="2.300" cy="2.100" r="1.800" fill="none" stroke="#2b2b2b" stroke-width="1.100"/><path d="M3.700 3.500L5.400 5.200" stroke="#2b2b2b" stroke-width="1.350" stroke-linecap="round"/></g></defs></svg><div style="position:absolute;left:94.0px;top:260.2px;width:112px;height:34.6px;background:#f8f8f8;border:.6px solid #e3e3e3;"></div><div style="position:absolute;left:94.0px;top:260.2px;width:21.9px;height:34.6px;background:#43a667;"></div><div style="position:absolute;left:160.95px;top:267px;height:13px;line-height:13px;font-size:6.1px;color:#2a2a2a;font-weight:bold;transform:translateX(-50%);white-space:nowrap;"><i>温</i><i>度</i>1(<i>℃</i>)</div><div style="position:absolute;left:160.95px;top:276px;height:15px;line-height:15px;font-size:8.1px;color:#2fa850;transform:translateX(-50%);white-space:nowrap;">5.6</div><div style="position:absolute;left:210.8px;top:260.2px;width:112px;height:34.6px;background:#f8f8f8;border:.6px solid #e3e3e3;"></div><div style="position:absolute;left:210.8px;top:260.2px;width:21.9px;height:34.6px;background:#43a667;"></div><div style="position:absolute;left:277.75px;top:267px;height:13px;line-height:13px;font-size:6.1px;color:#2a2a2a;font-weight:bold;transform:translateX(-50%);white-space:nowrap;"><i>湿</i><i>度</i>1(%RH)</div><div style="position:absolute;left:277.75px;top:276px;height:15px;line-height:15px;font-size:8.1px;color:#2fa850;transform:translateX(-50%);white-space:nowrap;">65.3</div><div style="position:absolute;left:327.6px;top:260.2px;width:112px;height:34.6px;background:#f8f8f8;border:.6px solid #e3e3e3;"></div><div style="position:absolute;left:327.6px;top:260.2px;width:21.9px;height:34.6px;background:#43a667;"></div><div style="position:absolute;left:394.55px;top:267px;height:13px;line-height:13px;font-size:6.1px;color:#2a2a2a;font-weight:bold;transform:translateX(-50%);white-space:nowrap;"><i>温</i><i>度</i>2(<i>℃</i>)</div><div style="position:absolute;left:394.55px;top:276px;height:15px;line-height:15px;font-size:8.1px;color:#2fa850;transform:translateX(-50%);white-space:nowrap;">5.3</div><div style="position:absolute;left:444.4px;top:260.2px;width:112px;height:34.6px;background:#f8f8f8;border:.6px solid #e3e3e3;"></div><div style="position:absolute;left:444.4px;top:260.2px;width:21.9px;height:34.6px;background:#43a667;"></div><div style="position:absolute;left:511.34999999999997px;top:267px;height:13px;line-height:13px;font-size:6.1px;color:#2a2a2a;font-weight:bold;transform:translateX(-50%);white-space:nowrap;"><i>湿</i><i>度</i>2(%RH)</div><div style="position:absolute;left:511.34999999999997px;top:276px;height:15px;line-height:15px;font-size:8.1px;color:#2fa850;transform:translateX(-50%);white-space:nowrap;">66.6</div><div style="position:absolute;left:561.2px;top:260.2px;width:112px;height:34.6px;background:#f8f8f8;border:.6px solid #e3e3e3;"></div><div style="position:absolute;left:561.2px;top:260.2px;width:21.9px;height:34.6px;background:#43a667;"></div><div style="position:absolute;left:628.15px;top:267px;height:13px;line-height:13px;font-size:6.1px;color:#2a2a2a;font-weight:bold;transform:translateX(-50%);white-space:nowrap;"><i>温</i><i>度</i>3(<i>℃</i>)</div><div style="position:absolute;left:628.15px;top:276px;height:15px;line-height:15px;font-size:8.1px;color:#2fa850;transform:translateX(-50%);white-space:nowrap;">5.9</div><div style="position:absolute;left:678.0px;top:260.2px;width:112px;height:34.6px;background:#f8f8f8;border:.6px solid #e3e3e3;"></div><div style="position:absolute;left:678.0px;top:260.2px;width:21.9px;height:34.6px;background:#43a667;"></div><div style="position:absolute;left:744.9499999999999px;top:267px;height:13px;line-height:13px;font-size:6.1px;color:#2a2a2a;font-weight:bold;transform:translateX(-50%);white-space:nowrap;"><i>湿</i><i>度</i>3(%RH)</div><div style="position:absolute;left:744.9499999999999px;top:276px;height:15px;line-height:15px;font-size:8.1px;color:#2fa850;transform:translateX(-50%);white-space:nowrap;">63.1</div><div style="position:absolute;left:94.0px;top:299.45px;width:112px;height:34.6px;background:#f8f8f8;border:.6px solid #e3e3e3;"></div><div style="position:absolute;left:94.0px;top:299.45px;width:21.9px;height:34.6px;background:#43a667;"></div><div style="position:absolute;left:160.95px;top:306px;height:13px;line-height:13px;font-size:6.1px;color:#2a2a2a;font-weight:bold;transform:translateX(-50%);white-space:nowrap;"><i>温</i><i>度</i>4(<i>℃</i>)</div><div style="position:absolute;left:160.95px;top:316px;height:15px;line-height:15px;font-size:8.1px;color:#2fa850;transform:translateX(-50%);white-space:nowrap;">6.3</div><div style="position:absolute;left:210.8px;top:299.45px;width:112px;height:34.6px;background:#f8f8f8;border:.6px solid #e3e3e3;"></div><div style="position:absolute;left:210.8px;top:299.45px;width:21.9px;height:34.6px;background:#43a667;"></div><div style="position:absolute;left:277.75px;top:306px;height:13px;line-height:13px;font-size:6.1px;color:#2a2a2a;font-weight:bold;transform:translateX(-50%);white-space:nowrap;"><i>湿</i><i>度</i>4(%RH)</div><div style="position:absolute;left:277.75px;top:316px;height:15px;line-height:15px;font-size:8.1px;color:#2fa850;transform:translateX(-50%);white-space:nowrap;">56.1</div><div style="position:absolute;left:327.6px;top:299.45px;width:112px;height:34.6px;background:#f8f8f8;border:.6px solid #e3e3e3;"></div><div style="position:absolute;left:327.6px;top:299.45px;width:21.9px;height:34.6px;background:#43a667;"></div><div style="position:absolute;left:394.55px;top:306px;height:13px;line-height:13px;font-size:6.1px;color:#2a2a2a;font-weight:bold;transform:translateX(-50%);white-space:nowrap;"><i>温</i><i>度</i>5(<i>℃</i>)</div><div style="position:absolute;left:394.55px;top:316px;height:15px;line-height:15px;font-size:8.1px;color:#2fa850;transform:translateX(-50%);white-space:nowrap;">5.5</div><div style="position:absolute;left:444.4px;top:299.45px;width:112px;height:34.6px;background:#f8f8f8;border:.6px solid #e3e3e3;"></div><div style="position:absolute;left:444.4px;top:299.45px;width:21.9px;height:34.6px;background:#43a667;"></div><div style="position:absolute;left:511.34999999999997px;top:306px;height:13px;line-height:13px;font-size:6.1px;color:#2a2a2a;font-weight:bold;transform:translateX(-50%);white-space:nowrap;"><i>湿</i><i>度</i>5(%RH)</div><div style="position:absolute;left:511.34999999999997px;top:316px;height:15px;line-height:15px;font-size:8.1px;color:#2fa850;transform:translateX(-50%);white-space:nowrap;">68.1</div><div style="position:absolute;left:561.2px;top:299.45px;width:112px;height:34.6px;background:#f8f8f8;border:.6px solid #e3e3e3;"></div><div style="position:absolute;left:561.2px;top:299.45px;width:21.9px;height:34.6px;background:#43a667;"></div><div style="position:absolute;left:628.15px;top:306px;height:13px;line-height:13px;font-size:6.1px;color:#2a2a2a;font-weight:bold;transform:translateX(-50%);white-space:nowrap;"><i>温</i><i>度</i>6(<i>℃</i>)</div><div style="position:absolute;left:628.15px;top:316px;height:15px;line-height:15px;font-size:8.1px;color:#2fa850;transform:translateX(-50%);white-space:nowrap;">6.0</div><div style="position:absolute;left:678.0px;top:299.45px;width:112px;height:34.6px;background:#f8f8f8;border:.6px solid #e3e3e3;"></div><div style="position:absolute;left:678.0px;top:299.45px;width:21.9px;height:34.6px;background:#43a667;"></div><div style="position:absolute;left:744.9499999999999px;top:306px;height:13px;line-height:13px;font-size:6.1px;color:#2a2a2a;font-weight:bold;transform:translateX(-50%);white-space:nowrap;"><i>湿</i><i>度</i>6(%RH)</div><div style="position:absolute;left:744.9499999999999px;top:316px;height:15px;line-height:15px;font-size:8.1px;color:#2fa850;transform:translateX(-50%);white-space:nowrap;">61.1</div><div style="position:absolute;left:94.0px;top:338.7px;width:112px;height:34.6px;background:#f8f8f8;border:.6px solid #e3e3e3;"></div><div style="position:absolute;left:94.0px;top:338.7px;width:21.9px;height:34.6px;background:#43a667;"></div><div style="position:absolute;left:160.95px;top:345px;height:13px;line-height:13px;font-size:6.1px;color:#2a2a2a;font-weight:bold;transform:translateX(-50%);white-space:nowrap;"><i>温</i><i>度</i>7(<i>℃</i>)</div><div style="position:absolute;left:160.95px;top:355px;height:15px;line-height:15px;font-size:8.1px;color:#2fa850;transform:translateX(-50%);white-space:nowrap;">5.7</div><div style="position:absolute;left:210.8px;top:338.7px;width:112px;height:34.6px;background:#f8f8f8;border:.6px solid #e3e3e3;"></div><div style="position:absolute;left:210.8px;top:338.7px;width:21.9px;height:34.6px;background:#43a667;"></div><div style="position:absolute;left:277.75px;top:345px;height:13px;line-height:13px;font-size:6.1px;color:#2a2a2a;font-weight:bold;transform:translateX(-50%);white-space:nowrap;"><i>湿</i><i>度</i>7(%RH)</div><div style="position:absolute;left:277.75px;top:355px;height:15px;line-height:15px;font-size:8.1px;color:#2fa850;transform:translateX(-50%);white-space:nowrap;">56.9</div><div style="position:absolute;left:327.6px;top:338.7px;width:112px;height:34.6px;background:#f8f8f8;border:.6px solid #e3e3e3;"></div><div style="position:absolute;left:327.6px;top:338.7px;width:21.9px;height:34.6px;background:#43a667;"></div><div style="position:absolute;left:394.55px;top:345px;height:13px;line-height:13px;font-size:6.1px;color:#2a2a2a;font-weight:bold;transform:translateX(-50%);white-space:nowrap;"><i>温</i><i>度</i>8(<i>℃</i>)</div><div style="position:absolute;left:394.55px;top:355px;height:15px;line-height:15px;font-size:8.1px;color:#2fa850;transform:translateX(-50%);white-space:nowrap;">5.5</div><div style="position:absolute;left:444.4px;top:338.7px;width:112px;height:34.6px;background:#f8f8f8;border:.6px solid #e3e3e3;"></div><div style="position:absolute;left:444.4px;top:338.7px;width:21.9px;height:34.6px;background:#43a667;"></div><div style="position:absolute;left:511.34999999999997px;top:345px;height:13px;line-height:13px;font-size:6.1px;color:#2a2a2a;font-weight:bold;transform:translateX(-50%);white-space:nowrap;"><i>湿</i><i>度</i>8(%RH)</div><div style="position:absolute;left:511.34999999999997px;top:355px;height:15px;line-height:15px;font-size:8.1px;color:#2fa850;transform:translateX(-50%);white-space:nowrap;">68.8</div><svg style="left:0;top:0" width="800" height="422" viewBox="0 0 800 422"><use href="#rt" x="105.0" y="277.7"/><use href="#sr" x="198.3" y="263.2"/><use href="#rt" x="221.8" y="277.7"/><use href="#sr" x="315.1" y="263.2"/><use href="#rt" x="338.6" y="277.7"/><use href="#sr" x="431.9" y="263.2"/><use href="#rt" x="455.4" y="277.7"/><use href="#sr" x="548.7" y="263.2"/><use href="#rt" x="572.2" y="277.7"/><use href="#sr" x="665.5" y="263.2"/><use href="#rt" x="689.0" y="277.7"/><use href="#sr" x="782.3" y="263.2"/><use href="#rt" x="105.0" y="316.9"/><use href="#sr" x="198.3" y="302.4"/><use href="#rt" x="221.8" y="316.9"/><use href="#sr" x="315.1" y="302.4"/><use href="#rt" x="338.6" y="316.9"/><use href="#sr" x="431.9" y="302.4"/><use href="#rt" x="455.4" y="316.9"/><use href="#sr" x="548.7" y="302.4"/><use href="#rt" x="572.2" y="316.9"/><use href="#sr" x="665.5" y="302.4"/><use href="#rt" x="689.0" y="316.9"/><use href="#sr" x="782.3" y="302.4"/><use href="#rt" x="105.0" y="356.2"/><use href="#sr" x="198.3" y="341.7"/><use href="#rt" x="221.8" y="356.2"/><use href="#sr" x="315.1" y="341.7"/><use href="#rt" x="338.6" y="356.2"/><use href="#sr" x="431.9" y="341.7"/><use href="#rt" x="455.4" y="356.2"/><use href="#sr" x="548.7" y="341.7"/></svg><div style="position:absolute;left:679.2px;top:380px;height:16px;line-height:16px;font-size:9.2px;color:#c6c6c6;white-space:nowrap;"><i>激</i><i>活</i> Windows</div><div style="position:absolute;left:679.2px;top:392px;height:13px;line-height:13px;font-size:6.8px;color:#cdcdcd;white-space:nowrap;"><i>转</i><i>到</i>“<i>设</i><i>置</i>”<i>以</i><i>激</i><i>活</i> Windows<i>。</i></div>
<div style="position:absolute;left:782.2px;top:4.5px;width:14px;height:14px;background:#15283a;border-radius:50%;"></div><svg style="left:785.900px;top:8.200px" width="6.600" height="6.600" viewBox="0 0 16 16"><path d="M1 5V1h4M11 1h4v4M15 11v4h-4M5 15H1v-4" fill="none" stroke="#fff" stroke-width="1.700"/><rect x="5.200" y="5.200" width="5.600" height="5.600" fill="none" stroke="#fff" stroke-width="1.300"/><path d="M8 6v4" stroke="#fff" stroke-width="1.100"/></svg>
</body>
</html>
